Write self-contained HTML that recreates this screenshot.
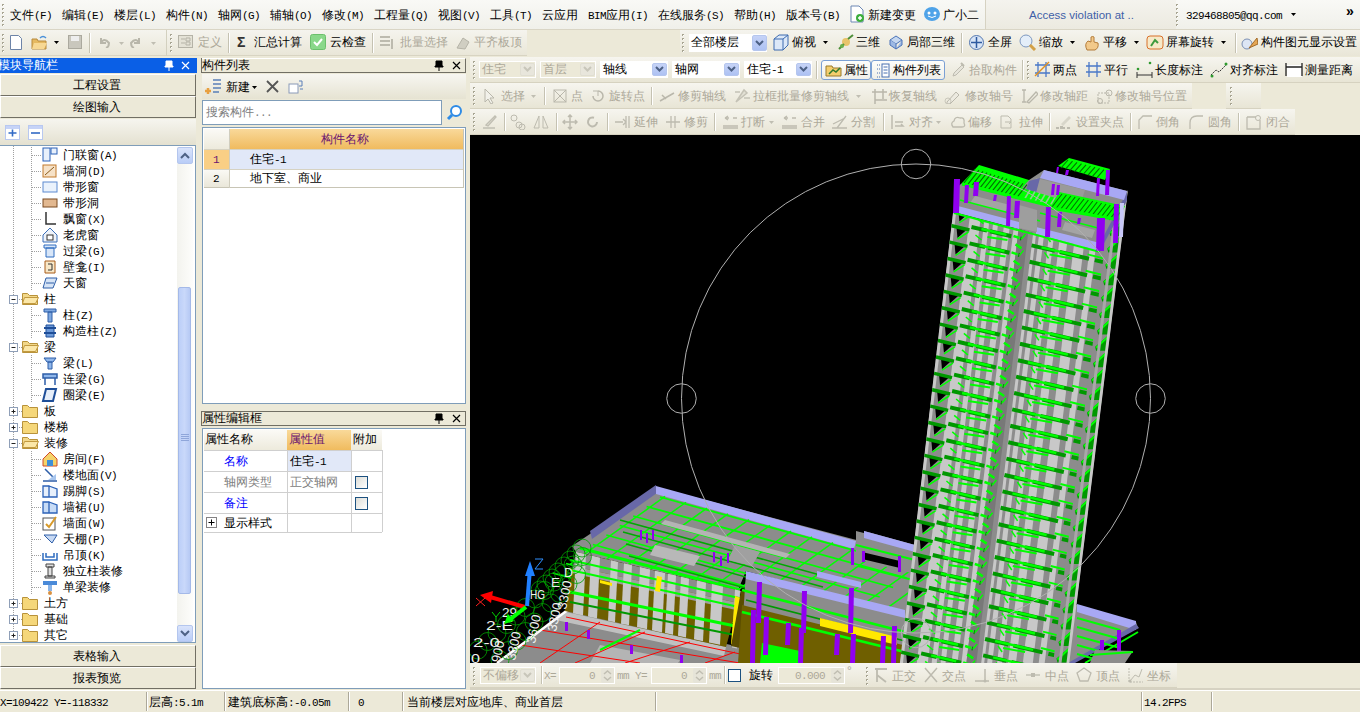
<!DOCTYPE html>
<html><head><meta charset="utf-8">
<style>
*{box-sizing:border-box;margin:0;padding:0}
body{width:1360px;height:712px;overflow:hidden;position:relative;background:#ECE9D8;font-family:"Liberation Sans",sans-serif;font-size:12px;color:#000}
.a{position:absolute;display:block}
.t{position:absolute;white-space:nowrap;line-height:12px;height:12px;font-size:12px}
.asc{font-family:"Liberation Mono",monospace;font-size:11px;letter-spacing:-0.6px}
.dis{color:#ACA899}
</style></head><body>

<div class="a" style="left:0px;top:0px;width:1360px;height:29px;background:linear-gradient(#F9F9F6,#F0F0EA)"></div>
<div class="a" style="left:0px;top:29px;width:1360px;height:1px;background:#D9D5C5"></div>
<svg class="a" style="left:2px;top:4px;" width="3" height="22" viewBox="0 0 3 22"><rect x="0" y="0" width="2" height="2" fill="#A8A592"/><rect x="1" y="1" width="1" height="1" fill="#fff"/><rect x="0" y="4" width="2" height="2" fill="#A8A592"/><rect x="1" y="5" width="1" height="1" fill="#fff"/><rect x="0" y="8" width="2" height="2" fill="#A8A592"/><rect x="1" y="9" width="1" height="1" fill="#fff"/><rect x="0" y="12" width="2" height="2" fill="#A8A592"/><rect x="1" y="13" width="1" height="1" fill="#fff"/><rect x="0" y="16" width="2" height="2" fill="#A8A592"/><rect x="1" y="17" width="1" height="1" fill="#fff"/><rect x="0" y="20" width="2" height="2" fill="#A8A592"/><rect x="1" y="21" width="1" height="1" fill="#fff"/></svg>
<div class="t " style="left:10px;top:9px;color:#000;">文件<span class="asc">(F)</span></div>
<div class="t " style="left:62px;top:9px;color:#000;">编辑<span class="asc">(E)</span></div>
<div class="t " style="left:114px;top:9px;color:#000;">楼层<span class="asc">(L)</span></div>
<div class="t " style="left:166px;top:9px;color:#000;">构件<span class="asc">(N)</span></div>
<div class="t " style="left:218px;top:9px;color:#000;">轴网<span class="asc">(G)</span></div>
<div class="t " style="left:270px;top:9px;color:#000;">辅轴<span class="asc">(O)</span></div>
<div class="t " style="left:322px;top:9px;color:#000;">修改<span class="asc">(M)</span></div>
<div class="t " style="left:374px;top:9px;color:#000;">工程量<span class="asc">(Q)</span></div>
<div class="t " style="left:438px;top:9px;color:#000;">视图<span class="asc">(V)</span></div>
<div class="t " style="left:490px;top:9px;color:#000;">工具<span class="asc">(T)</span></div>
<div class="t " style="left:542px;top:9px;color:#000;">云应用</div>
<div class="t " style="left:588px;top:9px;color:#000;"><span class="asc">BIM</span>应用<span class="asc">(I)</span></div>
<div class="t " style="left:658px;top:9px;color:#000;">在线服务<span class="asc">(S)</span></div>
<div class="t " style="left:734px;top:9px;color:#000;">帮助<span class="asc">(H)</span></div>
<div class="t " style="left:786px;top:9px;color:#000;">版本号<span class="asc">(B)</span></div>
<svg class="a" style="left:849px;top:5px;" width="16" height="18" viewBox="0 0 16 18"><path d="M2 1h8l4 4v12H2z" fill="#fff" stroke="#6C87B4"/><circle cx="11" cy="13" r="4" fill="#3DAE3D"/><path fill="none" d="M9 13h4M11 11v4" stroke="#fff" stroke-width="1.5"/></svg>
<div class="t " style="left:868px;top:9px;color:#000;">新建变更</div>
<svg class="a" style="left:923px;top:6px;" width="18" height="16" viewBox="0 0 18 16"><ellipse cx="9" cy="8" rx="8" ry="7" fill="#4FA3E8"/><circle cx="6" cy="7" r="1.5" fill="#fff"/><circle cx="12" cy="7" r="1.5" fill="#fff"/><path d="M5 10q4 3 8 0" stroke="#fff" fill="none"/></svg>
<div class="t " style="left:943px;top:9px;color:#000;">广小二</div>
<div class="a" style="left:985px;top:0px;width:1px;height:29px;background:#D6D2C2"></div>
<div class="a" style="left:986px;top:0px;width:190px;height:29px;background:linear-gradient(#F4F3EE,#ECEAE0)"></div>
<div class="t" style="left:1029px;top:8px;color:#3F5FA8;font-size:11.5px;line-height:14px;height:14px;letter-spacing:0">Access violation at ..</div>
<svg class="a" style="left:1176px;top:4px;" width="3" height="22" viewBox="0 0 3 22"><rect x="0" y="0" width="2" height="2" fill="#A8A592"/><rect x="1" y="1" width="1" height="1" fill="#fff"/><rect x="0" y="4" width="2" height="2" fill="#A8A592"/><rect x="1" y="5" width="1" height="1" fill="#fff"/><rect x="0" y="8" width="2" height="2" fill="#A8A592"/><rect x="1" y="9" width="1" height="1" fill="#fff"/><rect x="0" y="12" width="2" height="2" fill="#A8A592"/><rect x="1" y="13" width="1" height="1" fill="#fff"/><rect x="0" y="16" width="2" height="2" fill="#A8A592"/><rect x="1" y="17" width="1" height="1" fill="#fff"/><rect x="0" y="20" width="2" height="2" fill="#A8A592"/><rect x="1" y="21" width="1" height="1" fill="#fff"/></svg>
<div class="a" style="left:1180px;top:0px;width:160px;height:29px;background:linear-gradient(#F9F9F6,#F0F0EA)"></div>
<div class="t " style="left:1186px;top:9px;color:#000;"><span class="asc">329468805@qq.com</span></div>
<svg class="a" style="left:1291px;top:13px;" width="5" height="3" viewBox="0 0 5 3"><path d="M0 0h5L2.5 3z" fill="#000"/></svg>
<div class="t " style="left:1346px;top:5px;color:#000;font-size:14px;font-weight:bold">»</div>
<div class="a" style="left:0px;top:30px;width:1360px;height:26px;background:#ECE9D8"></div>
<div class="a" style="left:0px;top:30px;width:527px;height:26px;background:linear-gradient(#F5F4EE,#E9E6D7)"></div>
<div class="a" style="left:0px;top:55px;width:527px;height:1px;background:#D8D4C2"></div>
<svg class="a" style="left:2px;top:34px;" width="3" height="18" viewBox="0 0 3 18"><rect x="0" y="0" width="2" height="2" fill="#A8A592"/><rect x="1" y="1" width="1" height="1" fill="#fff"/><rect x="0" y="4" width="2" height="2" fill="#A8A592"/><rect x="1" y="5" width="1" height="1" fill="#fff"/><rect x="0" y="8" width="2" height="2" fill="#A8A592"/><rect x="1" y="9" width="1" height="1" fill="#fff"/><rect x="0" y="12" width="2" height="2" fill="#A8A592"/><rect x="1" y="13" width="1" height="1" fill="#fff"/><rect x="0" y="16" width="2" height="2" fill="#A8A592"/><rect x="1" y="17" width="1" height="1" fill="#fff"/></svg>
<svg class="a" style="left:10px;top:35px;" width="12" height="15" viewBox="0 0 12 15"><path d="M0.5 0.5h8l3 3v11h-11z" fill="#fff" stroke="#6D84A8"/></svg>
<svg class="a" style="left:31px;top:35px;" width="17" height="15" viewBox="0 0 17 15"><path d="M1 4h5l1 2h8v8H1z" fill="#E5B961" stroke="#B88A3C"/><path d="M3 8h13l-3 6H1z" fill="#F7D893"/><path d="M9 3q3-3 6 0" stroke="#4A90D9" fill="none" stroke-width="1.5"/></svg>
<svg class="a" style="left:54px;top:41px;" width="5" height="3" viewBox="0 0 5 3"><path d="M0 0h5L2.5 3z" fill="#000"/></svg>
<svg class="a" style="left:68px;top:35px;" width="14" height="14" viewBox="0 0 14 14"><rect x="0.5" y="0.5" width="13" height="13" fill="#C9C7BD" stroke="#ABA99E"/><rect x="3" y="1" width="8" height="5" fill="#EEE"/></svg>
<div class="a" style="left:89px;top:33px;width:1px;height:20px;background:#C5C2B2"></div>
<div class="a" style="left:90px;top:33px;width:1px;height:20px;background:#fff"></div>
<svg class="a" style="left:98px;top:36px;" width="12" height="12" viewBox="0 0 12 12"><path d="M3 2v5h5M3 7q3-6 8 0q0 4-3 5" stroke="#B8B6AA" stroke-width="2" fill="none"/></svg>
<svg class="a" style="left:119px;top:42px;" width="5" height="3" viewBox="0 0 5 3"><path d="M0 0h5L2.5 3z" fill="#C0BEB2"/></svg>
<svg class="a" style="left:130px;top:36px;" width="12" height="12" viewBox="0 0 12 12"><path d="M9 2v5H4M9 7q-3-6-8 0q0 4 3 5" stroke="#B8B6AA" stroke-width="2" fill="none"/></svg>
<svg class="a" style="left:151px;top:42px;" width="5" height="3" viewBox="0 0 5 3"><path d="M0 0h5L2.5 3z" fill="#C0BEB2"/></svg>
<div class="a" style="left:166px;top:30px;width:1px;height:26px;background:#D3D0BF"></div>
<svg class="a" style="left:170px;top:34px;" width="3" height="18" viewBox="0 0 3 18"><rect x="0" y="0" width="2" height="2" fill="#A8A592"/><rect x="1" y="1" width="1" height="1" fill="#fff"/><rect x="0" y="4" width="2" height="2" fill="#A8A592"/><rect x="1" y="5" width="1" height="1" fill="#fff"/><rect x="0" y="8" width="2" height="2" fill="#A8A592"/><rect x="1" y="9" width="1" height="1" fill="#fff"/><rect x="0" y="12" width="2" height="2" fill="#A8A592"/><rect x="1" y="13" width="1" height="1" fill="#fff"/><rect x="0" y="16" width="2" height="2" fill="#A8A592"/><rect x="1" y="17" width="1" height="1" fill="#fff"/></svg>
<svg class="a" style="left:178px;top:35px;" width="15" height="13" viewBox="0 0 15 13"><rect x="0.5" y="0.5" width="14" height="12" fill="#E4E2D6" stroke="#B5B3A7"/><path d="M3 4h4M3 8h4M8 3h4v3H8zM8 7h4v3H8z" stroke="#B5B3A7" fill="none"/></svg>
<div class="t dis" style="left:198px;top:36px;color:#ACA899;">定义</div>
<div class="a" style="left:228px;top:33px;width:1px;height:20px;background:#C5C2B2"></div>
<div class="a" style="left:229px;top:33px;width:1px;height:20px;background:#fff"></div>
<div class="t " style="left:237px;top:36px;color:#000;font-size:14px;font-weight:bold;color:#333">Σ</div>
<div class="t " style="left:254px;top:36px;color:#000;">汇总计算</div>
<svg class="a" style="left:310px;top:34px;" width="16" height="16" viewBox="0 0 16 16"><rect x="0.5" y="0.5" width="15" height="15" rx="2" fill="#8AD88A" stroke="#6CC06C"/><path d="M4 8l3 3l5-6" stroke="#fff" stroke-width="2" fill="none"/></svg>
<div class="t " style="left:330px;top:36px;color:#000;">云检查</div>
<div class="a" style="left:372px;top:33px;width:1px;height:20px;background:#C5C2B2"></div>
<div class="a" style="left:373px;top:33px;width:1px;height:20px;background:#fff"></div>
<svg class="a" style="left:379px;top:35px;" width="16" height="14" viewBox="0 0 16 14"><path fill="none" d="M1 2h10M1 6h10M1 10h10M13 4v10" stroke="#BDBBAF" stroke-width="2"/></svg>
<div class="t dis" style="left:400px;top:36px;color:#ACA899;">批量选择</div>
<svg class="a" style="left:455px;top:35px;" width="16" height="15" viewBox="0 0 16 15"><path d="M2 13l6-10l6 4l-4 7z" fill="#D0CEC2" stroke="#B5B3A7"/></svg>
<div class="t dis" style="left:474px;top:36px;color:#ACA899;">平齐板顶</div>
<svg class="a" style="left:682px;top:34px;" width="3" height="18" viewBox="0 0 3 18"><rect x="0" y="0" width="2" height="2" fill="#A8A592"/><rect x="1" y="1" width="1" height="1" fill="#fff"/><rect x="0" y="4" width="2" height="2" fill="#A8A592"/><rect x="1" y="5" width="1" height="1" fill="#fff"/><rect x="0" y="8" width="2" height="2" fill="#A8A592"/><rect x="1" y="9" width="1" height="1" fill="#fff"/><rect x="0" y="12" width="2" height="2" fill="#A8A592"/><rect x="1" y="13" width="1" height="1" fill="#fff"/><rect x="0" y="16" width="2" height="2" fill="#A8A592"/><rect x="1" y="17" width="1" height="1" fill="#fff"/></svg>
<div class="a" style="left:680px;top:30px;width:680px;height:26px;background:linear-gradient(#F5F4EE,#E9E6D7)"></div>
<svg class="a" style="left:682px;top:34px;" width="3" height="18" viewBox="0 0 3 18"><rect x="0" y="0" width="2" height="2" fill="#A8A592"/><rect x="1" y="1" width="1" height="1" fill="#fff"/><rect x="0" y="4" width="2" height="2" fill="#A8A592"/><rect x="1" y="5" width="1" height="1" fill="#fff"/><rect x="0" y="8" width="2" height="2" fill="#A8A592"/><rect x="1" y="9" width="1" height="1" fill="#fff"/><rect x="0" y="12" width="2" height="2" fill="#A8A592"/><rect x="1" y="13" width="1" height="1" fill="#fff"/><rect x="0" y="16" width="2" height="2" fill="#A8A592"/><rect x="1" y="17" width="1" height="1" fill="#fff"/></svg>
<div class="a" style="left:689px;top:34px;width:78px;height:18px;background:#fff;border:1px solid #fff"></div>
<div class="t " style="left:691px;top:36px;color:#000;">全部楼层</div>
<div class="a" style="left:752px;top:35px;width:15px;height:16px;background:linear-gradient(#C6D3F7,#AEC2F3);border:1px solid #B5C6EE;border-radius:2px"></div>
<svg class="a" style="left:755px;top:40px;" width="9" height="6" viewBox="0 0 9 6"><path d="M1 1l3.5 3.5L8 1" stroke="#4D6185" stroke-width="2" fill="none"/></svg>
<svg class="a" style="left:772px;top:34px;" width="17" height="17" viewBox="0 0 17 17"><path d="M2 5l5-4h9v10l-5 5H2z" fill="#DCE8F8" stroke="#3C6BB0"/><path d="M2 5h9v11M11 5l5-4" stroke="#3C6BB0" fill="none"/></svg>
<div class="t " style="left:792px;top:36px;color:#000;">俯视</div>
<svg class="a" style="left:823px;top:41px;" width="5" height="3" viewBox="0 0 5 3"><path d="M0 0h5L2.5 3z" fill="#000"/></svg>
<svg class="a" style="left:837px;top:34px;" width="17" height="17" viewBox="0 0 17 17"><circle cx="9" cy="8" r="4" fill="#E8C46A"/><path fill="none" d="M2 15l5-5M11 5l5-4" stroke="#4E8F3A" stroke-width="2"/><circle cx="5" cy="12" r="2" fill="#6AAF4A"/></svg>
<div class="t " style="left:856px;top:36px;color:#000;">三维</div>
<svg class="a" style="left:887px;top:34px;" width="17" height="17" viewBox="0 0 17 17"><path d="M3 6l6-4l6 4l-6 4z" fill="#C5D7F0" stroke="#4A73B8"/><path d="M3 6v5l6 4v-5M15 6v5l-6 4" fill="#9DB9E4" stroke="#4A73B8"/></svg>
<div class="t " style="left:907px;top:36px;color:#000;">局部三维</div>
<div class="a" style="left:961px;top:33px;width:1px;height:20px;background:#C5C2B2"></div>
<div class="a" style="left:962px;top:33px;width:1px;height:20px;background:#fff"></div>
<svg class="a" style="left:968px;top:34px;" width="17" height="17" viewBox="0 0 17 17"><circle cx="8.5" cy="8.5" r="7" fill="#D7E4F6" stroke="#5578B0"/><path fill="none" d="M8.5 3v11M3 8.5h11" stroke="#2E5AA0" stroke-width="1.5"/></svg>
<div class="t " style="left:988px;top:36px;color:#000;">全屏</div>
<svg class="a" style="left:1019px;top:34px;" width="18" height="17" viewBox="0 0 18 17"><circle cx="7" cy="7" r="6" fill="#E4EEF9" stroke="#7D98C0"/><path fill="none" d="M11 11l5 5" stroke="#D3A046" stroke-width="3"/></svg>
<div class="t " style="left:1039px;top:36px;color:#000;">缩放</div>
<svg class="a" style="left:1070px;top:41px;" width="5" height="3" viewBox="0 0 5 3"><path d="M0 0h5L2.5 3z" fill="#000"/></svg>
<svg class="a" style="left:1083px;top:34px;" width="18" height="17" viewBox="0 0 18 17"><path d="M4 16q-3-6 1-9l3 1v-5q2-1 3 0v5l4 1q1 5-3 7z" fill="#F2C98A" stroke="#B47C3A"/></svg>
<div class="t " style="left:1103px;top:36px;color:#000;">平移</div>
<svg class="a" style="left:1134px;top:41px;" width="5" height="3" viewBox="0 0 5 3"><path d="M0 0h5L2.5 3z" fill="#000"/></svg>
<svg class="a" style="left:1146px;top:34px;" width="18" height="17" viewBox="0 0 18 17"><rect x="1" y="2" width="16" height="13" rx="3" fill="#F6E9C8" stroke="#D8702A"/><path d="M5 12l4-6l3 3" stroke="#3E9A3E" stroke-width="2" fill="none"/></svg>
<div class="t " style="left:1166px;top:36px;color:#000;">屏幕旋转</div>
<svg class="a" style="left:1221px;top:41px;" width="5" height="3" viewBox="0 0 5 3"><path d="M0 0h5L2.5 3z" fill="#000"/></svg>
<div class="a" style="left:1235px;top:33px;width:1px;height:20px;background:#C5C2B2"></div>
<div class="a" style="left:1236px;top:33px;width:1px;height:20px;background:#fff"></div>
<svg class="a" style="left:1241px;top:34px;" width="17" height="17" viewBox="0 0 17 17"><circle cx="6" cy="10" r="5" fill="#DDE6F4" stroke="#7B8FB3"/><path d="M8 14l8-10l1 6z" fill="#E5A754" stroke="#A36B2A"/></svg>
<div class="t " style="left:1261px;top:36px;color:#000;">构件图元显示设置</div>
<div class="a" style="left:0px;top:56px;width:1360px;height:2px;background:#ECE9D8"></div>
<div class="a" style="left:0px;top:58px;width:197px;height:15px;background:#0A5FE6"></div>
<div class="t " style="left:-2px;top:59px;color:#fff;">模块导航栏</div>
<svg class="a" style="left:164px;top:60px;" width="10" height="11" viewBox="0 0 10 11"><path d="M2 1h6v5h1v1H1V6h1zM5 7v4" stroke="#fff" fill="#fff"/></svg>
<svg class="a" style="left:181px;top:61px;" width="9" height="9" viewBox="0 0 9 9"><path fill="none" d="M1 1l7 7M8 1l-7 7" stroke="#fff" stroke-width="1.2"/></svg>
<div class="a" style="left:0px;top:74px;width:196px;height:22px;background:#ECE9D8;border:1px solid;border-color:#fff #716F64 #716F64 #fff"></div>
<div class="t " style="left:73px;top:79px;color:#000;">工程设置</div>
<div class="a" style="left:0px;top:96px;width:196px;height:22px;background:#ECE9D8;border:1px solid;border-color:#fff #716F64 #716F64 #fff"></div>
<div class="t " style="left:73px;top:101px;color:#000;">绘图输入</div>
<div class="a" style="left:0px;top:119px;width:196px;height:27px;background:linear-gradient(#F6F5EF,#E3E0CF)"></div>
<div class="a" style="left:0px;top:145px;width:196px;height:1px;background:#7F9DB9"></div>
<div class="a" style="left:5px;top:125px;width:15px;height:15px;background:linear-gradient(#C6D3F7 0 3px,#fff 3px);border:1px solid #B8C8F0"></div>
<svg class="a" style="left:5px;top:125px;" width="15" height="15" viewBox="0 0 15 15"><path fill="none" d="M3.5 8h8M7.5 4.5v7" stroke="#316AC5" stroke-width="1.6"/></svg>
<div class="a" style="left:28px;top:125px;width:15px;height:15px;background:linear-gradient(#C6D3F7 0 3px,#fff 3px);border:1px solid #B8C8F0"></div>
<svg class="a" style="left:28px;top:125px;" width="15" height="15" viewBox="0 0 15 15"><path fill="none" d="M3 8h9" stroke="#316AC5" stroke-width="1.6"/></svg>
<div class="a" style="left:0px;top:146px;width:196px;height:497px;background:#fff;border-right:1px solid #7F9DB9;border-bottom:1px solid #7F9DB9"></div>
<div class="t " style="left:63px;top:149px;color:#000;">门联窗<span class="asc">(A)</span></div>
<div class="t " style="left:63px;top:165px;color:#000;">墙洞<span class="asc">(D)</span></div>
<div class="t " style="left:63px;top:181px;color:#000;">带形窗</div>
<div class="t " style="left:63px;top:197px;color:#000;">带形洞</div>
<div class="t " style="left:63px;top:213px;color:#000;">飘窗<span class="asc">(X)</span></div>
<div class="t " style="left:63px;top:229px;color:#000;">老虎窗</div>
<div class="t " style="left:63px;top:245px;color:#000;">过梁<span class="asc">(G)</span></div>
<div class="t " style="left:63px;top:261px;color:#000;">壁龛<span class="asc">(I)</span></div>
<div class="t " style="left:63px;top:277px;color:#000;">天窗</div>
<div class="t " style="left:44px;top:293px;color:#000;">柱</div>
<div class="t " style="left:63px;top:309px;color:#000;">柱<span class="asc">(Z)</span></div>
<div class="t " style="left:63px;top:325px;color:#000;">构造柱<span class="asc">(Z)</span></div>
<div class="t " style="left:44px;top:341px;color:#000;">梁</div>
<div class="t " style="left:63px;top:357px;color:#000;">梁<span class="asc">(L)</span></div>
<div class="t " style="left:63px;top:373px;color:#000;">连梁<span class="asc">(G)</span></div>
<div class="t " style="left:63px;top:389px;color:#000;">圈梁<span class="asc">(E)</span></div>
<div class="t " style="left:44px;top:405px;color:#000;">板</div>
<div class="t " style="left:44px;top:421px;color:#000;">楼梯</div>
<div class="t " style="left:44px;top:437px;color:#000;">装修</div>
<div class="t " style="left:63px;top:453px;color:#000;">房间<span class="asc">(F)</span></div>
<div class="t " style="left:63px;top:469px;color:#000;">楼地面<span class="asc">(V)</span></div>
<div class="t " style="left:63px;top:485px;color:#000;">踢脚<span class="asc">(S)</span></div>
<div class="t " style="left:63px;top:501px;color:#000;">墙裙<span class="asc">(U)</span></div>
<div class="t " style="left:63px;top:517px;color:#000;">墙面<span class="asc">(W)</span></div>
<div class="t " style="left:63px;top:533px;color:#000;">天棚<span class="asc">(P)</span></div>
<div class="t " style="left:63px;top:549px;color:#000;">吊顶<span class="asc">(K)</span></div>
<div class="t " style="left:63px;top:565px;color:#000;">独立柱装修</div>
<div class="t " style="left:63px;top:581px;color:#000;">单梁装修</div>
<div class="t " style="left:44px;top:597px;color:#000;">土方</div>
<div class="t " style="left:44px;top:613px;color:#000;">基础</div>
<div class="t " style="left:44px;top:629px;color:#000;">其它</div>
<svg class="a" style="left:0px;top:0px;pointer-events:none" width="176" height="712" viewBox="0 0 176 712"><path fill="none" d="M13.5 146V636" stroke="#A0A0A0" stroke-dasharray="1 1"/><path fill="none" d="M31.5 147V163" stroke="#A0A0A0" stroke-dasharray="1 1"/><path fill="none" d="M32 155.5H41" stroke="#A0A0A0" stroke-dasharray="1 1"/><g transform="translate(42 147)"><rect x="1" y="1" width="7" height="13" fill="#E8F0FB" stroke="#2C62B8"/><rect x="9" y="1" width="6" height="6" fill="#E8F0FB" stroke="#2C62B8"/></g><path fill="none" d="M31.5 163V179" stroke="#A0A0A0" stroke-dasharray="1 1"/><path fill="none" d="M32 171.5H41" stroke="#A0A0A0" stroke-dasharray="1 1"/><g transform="translate(42 163)"><rect x="1" y="2" width="13" height="12" fill="#F6E2C8" stroke="#C27A2C"/><path fill="none" d="M3 12l9-8" stroke="#8A5A1A"/></g><path fill="none" d="M31.5 179V195" stroke="#A0A0A0" stroke-dasharray="1 1"/><path fill="none" d="M32 187.5H41" stroke="#A0A0A0" stroke-dasharray="1 1"/><g transform="translate(42 179)"><rect x="1" y="3" width="14" height="10" fill="#EAF2FC" stroke="#5C8AD0"/></g><path fill="none" d="M31.5 195V211" stroke="#A0A0A0" stroke-dasharray="1 1"/><path fill="none" d="M32 203.5H41" stroke="#A0A0A0" stroke-dasharray="1 1"/><g transform="translate(42 195)"><rect x="1" y="4" width="14" height="8" fill="#E2B890" stroke="#7A4A20"/></g><path fill="none" d="M31.5 211V227" stroke="#A0A0A0" stroke-dasharray="1 1"/><path fill="none" d="M32 219.5H41" stroke="#A0A0A0" stroke-dasharray="1 1"/><g transform="translate(42 211)"><path d="M4 1v12h10" stroke="#333" fill="none" stroke-width="1.5"/></g><path fill="none" d="M31.5 227V243" stroke="#A0A0A0" stroke-dasharray="1 1"/><path fill="none" d="M32 235.5H41" stroke="#A0A0A0" stroke-dasharray="1 1"/><g transform="translate(42 227)"><path d="M1 8l7-7l7 7v7H1z" fill="#EEF3FA" stroke="#3A6EB8"/><rect x="5" y="8" width="6" height="5" fill="#fff" stroke="#333"/></g><path fill="none" d="M31.5 243V259" stroke="#A0A0A0" stroke-dasharray="1 1"/><path fill="none" d="M32 251.5H41" stroke="#A0A0A0" stroke-dasharray="1 1"/><g transform="translate(42 243)"><path d="M2 2h12v3H2zM4 5h8v9H4z" fill="#D8E6F8" stroke="#2E6CC0"/></g><path fill="none" d="M31.5 259V275" stroke="#A0A0A0" stroke-dasharray="1 1"/><path fill="none" d="M32 267.5H41" stroke="#A0A0A0" stroke-dasharray="1 1"/><g transform="translate(42 259)"><path d="M3 2h10v12H3z" fill="#F8E8C8" stroke="#A85C1A"/><path d="M6 5h4v6H6" stroke="#333" fill="none"/></g><path fill="none" d="M31.5 275V291" stroke="#A0A0A0" stroke-dasharray="1 1"/><path fill="none" d="M32 283.5H41" stroke="#A0A0A0" stroke-dasharray="1 1"/><g transform="translate(42 275)"><path d="M4 3h11l-4 10H1z" fill="#D6E4F6" stroke="#2E5EA8"/><path fill="none" d="M4 8h8" stroke="#2E5EA8"/></g><path fill="none" d="M17 299.5H22" stroke="#A0A0A0" stroke-dasharray="1 1"/><rect x="9.5" y="295.5" width="8" height="8" fill="#fff" stroke="#8F9FB8"/><path fill="none" d="M11.5 299.5h4" stroke="#222"/><path d="M22.5 293.5h5l2 2h8v9h-15z" fill="#F2D88A" stroke="#B8923A"/><path d="M24.5 297.5h14l-3 6h-13z" fill="#FBE7A8" stroke="#C29A40"/><path fill="none" d="M31.5 307V323" stroke="#A0A0A0" stroke-dasharray="1 1"/><path fill="none" d="M32 315.5H41" stroke="#A0A0A0" stroke-dasharray="1 1"/><g transform="translate(42 307)"><path d="M2 2h12v3H2zM6 5h4v10H6z" fill="#7FA8E0" stroke="#2E5EA8"/></g><path fill="none" d="M31.5 323V339" stroke="#A0A0A0" stroke-dasharray="1 1"/><path fill="none" d="M32 331.5H41" stroke="#A0A0A0" stroke-dasharray="1 1"/><g transform="translate(42 323)"><path d="M4 2h8v12H4z" fill="#6A98D8" stroke="#1E4E98"/><path fill="none" d="M2 5h12M2 10h12" stroke="#1E4E98" stroke-width="2"/></g><path fill="none" d="M17 347.5H22" stroke="#A0A0A0" stroke-dasharray="1 1"/><rect x="9.5" y="343.5" width="8" height="8" fill="#fff" stroke="#8F9FB8"/><path fill="none" d="M11.5 347.5h4" stroke="#222"/><path d="M22.5 341.5h5l2 2h8v9h-15z" fill="#F2D88A" stroke="#B8923A"/><path d="M24.5 345.5h14l-3 6h-13z" fill="#FBE7A8" stroke="#C29A40"/><path fill="none" d="M31.5 355V371" stroke="#A0A0A0" stroke-dasharray="1 1"/><path fill="none" d="M32 363.5H41" stroke="#A0A0A0" stroke-dasharray="1 1"/><g transform="translate(42 355)"><path d="M2 3h12l-3 4H5zM6 7h4v7H6z" fill="#8FB6EA" stroke="#2E5EA8"/></g><path fill="none" d="M31.5 371V387" stroke="#A0A0A0" stroke-dasharray="1 1"/><path fill="none" d="M32 379.5H41" stroke="#A0A0A0" stroke-dasharray="1 1"/><g transform="translate(42 371)"><path d="M1 3h14v4H1zM3 7v7M13 7v7" fill="#8FB6EA" stroke="#2E5EA8" stroke-width="1.5"/></g><path fill="none" d="M31.5 387V403" stroke="#A0A0A0" stroke-dasharray="1 1"/><path fill="none" d="M32 395.5H41" stroke="#A0A0A0" stroke-dasharray="1 1"/><g transform="translate(42 387)"><path d="M4 2h10l-3 12H1z" fill="#E6EEF9" stroke="#1E4E98" stroke-width="2"/></g><path fill="none" d="M17 411.5H22" stroke="#A0A0A0" stroke-dasharray="1 1"/><rect x="9.5" y="407.5" width="8" height="8" fill="#fff" stroke="#8F9FB8"/><path fill="none" d="M11.5 411.5h4" stroke="#222"/><path fill="none" d="M13.5 409.5v4" stroke="#222"/><path d="M22.5 405.5h5l2 2h8v10h-15z" fill="#F5D77A" stroke="#B8923A"/><path fill="none" d="M17 427.5H22" stroke="#A0A0A0" stroke-dasharray="1 1"/><rect x="9.5" y="423.5" width="8" height="8" fill="#fff" stroke="#8F9FB8"/><path fill="none" d="M11.5 427.5h4" stroke="#222"/><path fill="none" d="M13.5 425.5v4" stroke="#222"/><path d="M22.5 421.5h5l2 2h8v10h-15z" fill="#F5D77A" stroke="#B8923A"/><path fill="none" d="M17 443.5H22" stroke="#A0A0A0" stroke-dasharray="1 1"/><rect x="9.5" y="439.5" width="8" height="8" fill="#fff" stroke="#8F9FB8"/><path fill="none" d="M11.5 443.5h4" stroke="#222"/><path d="M22.5 437.5h5l2 2h8v9h-15z" fill="#F2D88A" stroke="#B8923A"/><path d="M24.5 441.5h14l-3 6h-13z" fill="#FBE7A8" stroke="#C29A40"/><path fill="none" d="M31.5 451V467" stroke="#A0A0A0" stroke-dasharray="1 1"/><path fill="none" d="M32 459.5H41" stroke="#A0A0A0" stroke-dasharray="1 1"/><g transform="translate(42 451)"><path d="M1 8l7-7l7 7v7H1z" fill="#F4D36A" stroke="#D04A2A"/><rect x="5" y="9" width="6" height="6" fill="#3E8ED8"/></g><path fill="none" d="M31.5 467V483" stroke="#A0A0A0" stroke-dasharray="1 1"/><path fill="none" d="M32 475.5H41" stroke="#A0A0A0" stroke-dasharray="1 1"/><g transform="translate(42 467)"><path fill="none" d="M1 14h14M3 2l10 10" stroke="#2E5EA8" stroke-width="1.5"/><path d="M6 13l8-6v6z" fill="#A8C6EE"/></g><path fill="none" d="M31.5 483V499" stroke="#A0A0A0" stroke-dasharray="1 1"/><path fill="none" d="M32 491.5H41" stroke="#A0A0A0" stroke-dasharray="1 1"/><g transform="translate(42 483)"><path d="M1 3h6v11H1zM7 3l8 3v8H7z" fill="#E8F0FB" stroke="#2C62B8" stroke-width="1.3"/></g><path fill="none" d="M31.5 499V515" stroke="#A0A0A0" stroke-dasharray="1 1"/><path fill="none" d="M32 507.5H41" stroke="#A0A0A0" stroke-dasharray="1 1"/><g transform="translate(42 499)"><path d="M1 3h6v11H1zM7 3l8 3v8H7z" fill="#C8DCF6" stroke="#2C62B8" stroke-width="1.3"/></g><path fill="none" d="M31.5 515V531" stroke="#A0A0A0" stroke-dasharray="1 1"/><path fill="none" d="M32 523.5H41" stroke="#A0A0A0" stroke-dasharray="1 1"/><g transform="translate(42 515)"><rect x="1" y="3" width="12" height="12" fill="#fff" stroke="#555"/><path d="M4 9l3 3l7-10" stroke="#D89A2A" stroke-width="2" fill="none"/></g><path fill="none" d="M31.5 531V547" stroke="#A0A0A0" stroke-dasharray="1 1"/><path fill="none" d="M32 539.5H41" stroke="#A0A0A0" stroke-dasharray="1 1"/><g transform="translate(42 531)"><path d="M2 4h13l-5 8z" fill="#C8DAF4" stroke="#2E5EA8"/></g><path fill="none" d="M31.5 547V563" stroke="#A0A0A0" stroke-dasharray="1 1"/><path fill="none" d="M32 555.5H41" stroke="#A0A0A0" stroke-dasharray="1 1"/><g transform="translate(42 547)"><path d="M1 6v7h14V6M4 6v4h8V6" stroke="#2E6CC0" stroke-width="1.5" fill="none"/></g><path fill="none" d="M31.5 563V579" stroke="#A0A0A0" stroke-dasharray="1 1"/><path fill="none" d="M32 571.5H41" stroke="#A0A0A0" stroke-dasharray="1 1"/><g transform="translate(42 563)"><path d="M4 1h8v3H4zM6 4h4v9H6zM3 13h10v2H3z" fill="#E0E0E0" stroke="#444"/></g><path fill="none" d="M31.5 579V595" stroke="#A0A0A0" stroke-dasharray="1 1"/><path fill="none" d="M32 587.5H41" stroke="#A0A0A0" stroke-dasharray="1 1"/><g transform="translate(42 579)"><path d="M1 2h14v4H1z" fill="#4A8AD8"/><path d="M6 6h4v6H6z" fill="#8AB4E8"/><circle cx="8" cy="14" r="2" fill="#D89040"/></g><path fill="none" d="M17 603.5H22" stroke="#A0A0A0" stroke-dasharray="1 1"/><rect x="9.5" y="599.5" width="8" height="8" fill="#fff" stroke="#8F9FB8"/><path fill="none" d="M11.5 603.5h4" stroke="#222"/><path fill="none" d="M13.5 601.5v4" stroke="#222"/><path d="M22.5 597.5h5l2 2h8v10h-15z" fill="#F5D77A" stroke="#B8923A"/><path fill="none" d="M17 619.5H22" stroke="#A0A0A0" stroke-dasharray="1 1"/><rect x="9.5" y="615.5" width="8" height="8" fill="#fff" stroke="#8F9FB8"/><path fill="none" d="M11.5 619.5h4" stroke="#222"/><path fill="none" d="M13.5 617.5v4" stroke="#222"/><path d="M22.5 613.5h5l2 2h8v10h-15z" fill="#F5D77A" stroke="#B8923A"/><path fill="none" d="M17 635.5H22" stroke="#A0A0A0" stroke-dasharray="1 1"/><rect x="9.5" y="631.5" width="8" height="8" fill="#fff" stroke="#8F9FB8"/><path fill="none" d="M11.5 635.5h4" stroke="#222"/><path fill="none" d="M13.5 633.5v4" stroke="#222"/><path d="M22.5 629.5h5l2 2h8v10h-15z" fill="#F5D77A" stroke="#B8923A"/></svg>
<div class="a" style="left:177px;top:147px;width:16px;height:495px;background:linear-gradient(90deg,#F3F3EE,#FDFDFB)"></div>
<div class="a" style="left:177px;top:147px;width:16px;height:17px;background:linear-gradient(#D9E3FB,#B9CDF7);border:1px solid #B4C6EE;border-radius:2px"></div>
<svg class="a" style="left:180px;top:152px;" width="10" height="7" viewBox="0 0 10 7"><path d="M1 6l4-4l4 4" stroke="#4D6185" stroke-width="2" fill="none"/></svg>
<div class="a" style="left:178px;top:287px;width:13px;height:307px;background:linear-gradient(90deg,#BCCFF8,#C9D8FA 50%,#B6C9F4);border:1px solid #A4B9E8;border-radius:2px"></div>
<svg class="a" style="left:181px;top:434px;" width="8" height="8" viewBox="0 0 8 8"><path fill="none" d="M0 .5h8M0 2.5h8M0 4.5h8M0 6.5h8" stroke="#8FA6DA"/></svg>
<div class="a" style="left:177px;top:625px;width:16px;height:17px;background:linear-gradient(#D9E3FB,#B9CDF7);border:1px solid #B4C6EE;border-radius:2px"></div>
<svg class="a" style="left:180px;top:630px;" width="10" height="7" viewBox="0 0 10 7"><path d="M1 1l4 4l4-4" stroke="#4D6185" stroke-width="2" fill="none"/></svg>
<div class="a" style="left:0px;top:645px;width:196px;height:22px;background:#ECE9D8;border:1px solid;border-color:#fff #716F64 #716F64 #fff"></div>
<div class="t " style="left:73px;top:650px;color:#000;">表格输入</div>
<div class="a" style="left:0px;top:667px;width:196px;height:22px;background:#ECE9D8;border:1px solid;border-color:#fff #716F64 #716F64 #fff"></div>
<div class="t " style="left:73px;top:672px;color:#000;">报表预览</div>
<div class="a" style="left:197px;top:58px;width:4px;height:632px;background:#ECE9D8"></div>
<div class="a" style="left:201px;top:58px;width:265px;height:15px;background:#ECE9D8;border-top:1px solid #fff;border-bottom:1px solid #716F64;border-right:1px solid #716F64"></div>
<div class="a" style="left:201px;top:58px;width:1px;height:15px;background:#716F64"></div>
<div class="t " style="left:202px;top:59px;color:#000;">构件列表</div>
<svg class="a" style="left:434px;top:60px;" width="10" height="11" viewBox="0 0 10 11"><path d="M2 1h6v5h1v1H1V6h1zM5 7v4" stroke="#000" fill="#000"/></svg>
<svg class="a" style="left:452px;top:61px;" width="9" height="9" viewBox="0 0 9 9"><path fill="none" d="M1 1l7 7M8 1l-7 7" stroke="#000" stroke-width="1.2"/></svg>
<div class="a" style="left:202px;top:74px;width:264px;height:25px;background:linear-gradient(#F7F6F1,#E6E3D2)"></div>
<svg class="a" style="left:205px;top:78px;" width="18" height="17" viewBox="0 0 18 17"><path fill="none" d="M8 2h8M8 6h8M8 10h8M8 14h6" stroke="#5A7FB8" stroke-width="1.5"/><path fill="none" d="M3 10v6M0 13h6" stroke="#E8A040" stroke-width="2.5"/></svg>
<div class="t " style="left:226px;top:81px;color:#000;">新建</div>
<svg class="a" style="left:252px;top:86px;" width="5" height="3" viewBox="0 0 5 3"><path d="M0 0h5L2.5 3z" fill="#000"/></svg>
<svg class="a" style="left:265px;top:79px;" width="15" height="15" viewBox="0 0 15 15"><path fill="none" d="M2 2l11 11M13 2L2 13" stroke="#555" stroke-width="1.8"/></svg>
<svg class="a" style="left:288px;top:80px;" width="16" height="14" viewBox="0 0 16 14"><rect x="1" y="4" width="9" height="9" fill="#fff" stroke="#8A9AB8"/><path fill="none" d="M11 1h3v5h-3M12 9h3" stroke="#5A7FB8"/></svg>
<div class="a" style="left:202px;top:100px;width:240px;height:25px;background:#fff;border:1px solid #7F9DB9"></div>
<div class="t " style="left:206px;top:106px;color:#808080;">搜索构件<span class="asc">...</span></div>
<div class="a" style="left:443px;top:100px;width:22px;height:25px;background:#ECE9D8"></div>
<svg class="a" style="left:446px;top:104px;" width="17" height="17" viewBox="0 0 17 17"><circle cx="10" cy="7" r="5" fill="#fff" stroke="#2E8BE6" stroke-width="2"/><path fill="none" d="M6 11l-4 4" stroke="#2E8BE6" stroke-width="3"/></svg>
<div class="a" style="left:202px;top:127px;width:264px;height:277px;background:#fff;border:1px solid #7F9DB9"></div>
<div class="a" style="left:204px;top:129px;width:25px;height:20px;background:linear-gradient(#FBFAF6,#EDEADC)"></div>
<div class="a" style="left:229px;top:129px;width:235px;height:20px;background:linear-gradient(#F9D99A,#F0BB5E)"></div>
<div class="t " style="left:321px;top:133px;color:#6A1570;">构件名称</div>
<div class="a" style="left:204px;top:149px;width:260px;height:1px;background:#D6D2C2"></div>
<div class="a" style="left:204px;top:150px;width:25px;height:19px;background:#F9CF85"></div>
<div class="a" style="left:229px;top:150px;width:235px;height:19px;background:#E1E8F8"></div>
<div class="t " style="left:213px;top:153px;color:#6A1570;"><span class="asc">1</span></div>
<div class="t " style="left:250px;top:153px;color:#000;">住宅<span class="asc">-1</span></div>
<div class="a" style="left:204px;top:169px;width:260px;height:1px;background:#D6D2C2"></div>
<div class="a" style="left:204px;top:170px;width:25px;height:18px;background:linear-gradient(#FAF9F4,#E9E6D8)"></div>
<div class="t " style="left:213px;top:172px;color:#000;"><span class="asc">2</span></div>
<div class="t " style="left:250px;top:172px;color:#000;">地下室、商业</div>
<div class="a" style="left:204px;top:187px;width:260px;height:1px;background:#C8C5B5"></div>
<div class="a" style="left:229px;top:129px;width:1px;height:59px;background:#D0CDBE"></div>
<div class="a" style="left:463px;top:129px;width:1px;height:59px;background:#C8C5B5"></div>
<div class="a" style="left:202px;top:405px;width:264px;height:6px;background:#ECE9D8"></div>
<div class="a" style="left:201px;top:411px;width:265px;height:15px;background:#ECE9D8;border-top:1px solid #716F64;border-bottom:1px solid #716F64;border-right:1px solid #716F64"></div>
<div class="a" style="left:201px;top:411px;width:1px;height:15px;background:#716F64"></div>
<div class="t " style="left:202px;top:412px;color:#000;">属性编辑框</div>
<svg class="a" style="left:434px;top:413px;" width="10" height="11" viewBox="0 0 10 11"><path d="M2 1h6v5h1v1H1V6h1zM5 7v4" stroke="#000" fill="#000"/></svg>
<svg class="a" style="left:452px;top:414px;" width="9" height="9" viewBox="0 0 9 9"><path fill="none" d="M1 1l7 7M8 1l-7 7" stroke="#000" stroke-width="1.2"/></svg>
<div class="a" style="left:202px;top:428px;width:264px;height:261px;background:#fff;border:1px solid #7F9DB9"></div>
<div class="a" style="left:204px;top:430px;width:83px;height:20px;background:linear-gradient(#FBFAF6,#EDEADC)"></div>
<div class="a" style="left:287px;top:430px;width:64px;height:20px;background:linear-gradient(#F9D99A,#F0BB5E)"></div>
<div class="a" style="left:351px;top:430px;width:31px;height:20px;background:linear-gradient(#FBFAF6,#EDEADC)"></div>
<div class="t " style="left:205px;top:433px;color:#000;">属性名称</div>
<div class="t " style="left:289px;top:433px;color:#6A1570;">属性值</div>
<div class="t " style="left:353px;top:433px;color:#000;">附加</div>
<div class="a" style="left:287px;top:450px;width:64px;height:21px;background:#E1E8F8"></div>
<svg class="a" style="left:204px;top:430px;" width="180" height="104" viewBox="0 0 180 104"><path fill="none" d="M0 20.5H178" stroke="#CFCFCF"/><path fill="none" d="M0 41.5H178" stroke="#CFCFCF"/><path fill="none" d="M0 62.5H178" stroke="#CFCFCF"/><path fill="none" d="M0 83.5H178" stroke="#CFCFCF"/><path fill="none" d="M0 102.5H178" stroke="#CFCFCF"/><path fill="none" d="M83.5 20V102" stroke="#CFCFCF"/><path fill="none" d="M147.5 20V102" stroke="#CFCFCF"/><path fill="none" d="M178.5 20V102" stroke="#CFCFCF"/></svg>
<div class="t " style="left:224px;top:455px;color:#0000FF;">名称</div>
<div class="t " style="left:290px;top:455px;color:#000;">住宅<span class="asc">-1</span></div>
<div class="t " style="left:224px;top:476px;color:#808080;">轴网类型</div>
<div class="t " style="left:290px;top:476px;color:#808080;">正交轴网</div>
<div class="t " style="left:224px;top:497px;color:#0000FF;">备注</div>
<div class="a" style="left:355px;top:476px;width:13px;height:13px;background:linear-gradient(135deg,#DCDCD6,#fff);border:1px solid #1C5180"></div>
<div class="a" style="left:355px;top:497px;width:13px;height:13px;background:linear-gradient(135deg,#DCDCD6,#fff);border:1px solid #1C5180"></div>
<div class="a" style="left:206px;top:517px;width:11px;height:11px;background:#fff;border:1px solid #848284"></div>
<svg class="a" style="left:206px;top:517px;" width="11" height="11" viewBox="0 0 11 11"><path fill="none" d="M2.5 5.5h6M5.5 2.5v6" stroke="#000"/></svg>
<div class="t " style="left:224px;top:517px;color:#000;">显示样式</div>
<div class="a" style="left:466px;top:58px;width:4px;height:632px;background:#ECE9D8"></div>
<div class="a" style="left:470px;top:57px;width:890px;height:78px;background:#ECE9D8"></div>
<div class="a" style="left:470px;top:57px;width:890px;height:26px;background:linear-gradient(#F6F5EF,#E8E5D5);border-bottom:1px solid #D6D2C0"></div>
<div class="a" style="left:470px;top:83px;width:722px;height:26px;background:linear-gradient(#F6F5EF,#E8E5D5);border-bottom:1px solid #D6D2C0"></div>
<div class="a" style="left:1226px;top:83px;width:35px;height:26px;background:linear-gradient(#F6F5EF,#E8E5D5);border-bottom:1px solid #D6D2C0"></div>
<div class="a" style="left:470px;top:109px;width:825px;height:26px;background:linear-gradient(#F6F5EF,#E8E5D5);border-bottom:1px solid #D6D2C0"></div>
<svg class="a" style="left:473px;top:61px;" width="3" height="18" viewBox="0 0 3 18"><rect x="0" y="0" width="2" height="2" fill="#A8A592"/><rect x="1" y="1" width="1" height="1" fill="#fff"/><rect x="0" y="4" width="2" height="2" fill="#A8A592"/><rect x="1" y="5" width="1" height="1" fill="#fff"/><rect x="0" y="8" width="2" height="2" fill="#A8A592"/><rect x="1" y="9" width="1" height="1" fill="#fff"/><rect x="0" y="12" width="2" height="2" fill="#A8A592"/><rect x="1" y="13" width="1" height="1" fill="#fff"/><rect x="0" y="16" width="2" height="2" fill="#A8A592"/><rect x="1" y="17" width="1" height="1" fill="#fff"/></svg>
<div class="a" style="left:479px;top:61px;width:57px;height:17px;background:#ECE9D8;border:1px solid #fff"></div>
<div class="t dis" style="left:482px;top:63px;color:#ACA899;">住宅</div>
<div class="a" style="left:520px;top:63px;width:15px;height:13px;background:#E8E6DC;border:1px solid #E0DED2;border-radius:2px"></div>
<svg class="a" style="left:523px;top:66px;" width="9" height="6" viewBox="0 0 9 6"><path d="M1 1l3.5 3.5L8 1" stroke="#C8C6BA" stroke-width="2" fill="none"/></svg>
<div class="a" style="left:540px;top:61px;width:56px;height:17px;background:#ECE9D8;border:1px solid #fff"></div>
<div class="t dis" style="left:543px;top:63px;color:#ACA899;">首层</div>
<div class="a" style="left:580px;top:63px;width:15px;height:13px;background:#E8E6DC;border:1px solid #E0DED2;border-radius:2px"></div>
<svg class="a" style="left:583px;top:66px;" width="9" height="6" viewBox="0 0 9 6"><path d="M1 1l3.5 3.5L8 1" stroke="#C8C6BA" stroke-width="2" fill="none"/></svg>
<div class="a" style="left:600px;top:61px;width:68px;height:17px;background:#fff;border:1px solid #fff"></div>
<div class="t " style="left:603px;top:63px;color:#000;">轴线</div>
<div class="a" style="left:652px;top:63px;width:15px;height:13px;background:linear-gradient(#C6D3F7,#AEC2F3);border:1px solid #B5C6EE;border-radius:2px"></div>
<svg class="a" style="left:655px;top:66px;" width="9" height="6" viewBox="0 0 9 6"><path d="M1 1l3.5 3.5L8 1" stroke="#4D6185" stroke-width="2" fill="none"/></svg>
<div class="a" style="left:672px;top:61px;width:68px;height:17px;background:#fff;border:1px solid #fff"></div>
<div class="t " style="left:675px;top:63px;color:#000;">轴网</div>
<div class="a" style="left:724px;top:63px;width:15px;height:13px;background:linear-gradient(#C6D3F7,#AEC2F3);border:1px solid #B5C6EE;border-radius:2px"></div>
<svg class="a" style="left:727px;top:66px;" width="9" height="6" viewBox="0 0 9 6"><path d="M1 1l3.5 3.5L8 1" stroke="#4D6185" stroke-width="2" fill="none"/></svg>
<div class="a" style="left:744px;top:61px;width:68px;height:17px;background:#fff;border:1px solid #fff"></div>
<div class="t " style="left:747px;top:63px;color:#000;">住宅<span class="asc">-1</span></div>
<div class="a" style="left:796px;top:63px;width:15px;height:13px;background:linear-gradient(#C6D3F7,#AEC2F3);border:1px solid #B5C6EE;border-radius:2px"></div>
<svg class="a" style="left:799px;top:66px;" width="9" height="6" viewBox="0 0 9 6"><path d="M1 1l3.5 3.5L8 1" stroke="#4D6185" stroke-width="2" fill="none"/></svg>
<div class="a" style="left:816px;top:61px;width:1px;height:18px;background:#C5C2B2"></div>
<div class="a" style="left:817px;top:61px;width:1px;height:18px;background:#fff"></div>
<div class="a" style="left:821px;top:60px;width:50px;height:20px;background:linear-gradient(#FDFDFB,#F0EFE8);border:1px solid #7BA0D4;border-radius:3px"></div>
<svg class="a" style="left:825px;top:63px;" width="17" height="14" viewBox="0 0 17 14"><path d="M1 3h6l1 2h8v8H1z" fill="#F4CE6E" stroke="#9A7A2A"/><path d="M4 11l4-4l3 2l4-4" stroke="#2E7A2E" stroke-width="1.5" fill="none"/></svg>
<div class="t " style="left:844px;top:64px;color:#000;">属性</div>
<div class="a" style="left:871px;top:60px;width:74px;height:20px;background:linear-gradient(#FDFDFB,#F0EFE8);border:1px solid #7BA0D4;border-radius:3px"></div>
<svg class="a" style="left:876px;top:63px;" width="14" height="15" viewBox="0 0 14 15"><path fill="none" d="M1 2h3M1 6h3M1 10h3M1 14h3" stroke="#4A70B0" stroke-dasharray="1 1"/><rect x="6" y="1" width="7" height="13" fill="#fff" stroke="#4A70B0"/><path fill="none" d="M7.5 4h4M7.5 7h4M7.5 10h4" stroke="#4A70B0"/></svg>
<div class="t " style="left:893px;top:64px;color:#000;">构件列表</div>
<svg class="a" style="left:951px;top:61px;" width="15" height="17" viewBox="0 0 15 17"><path d="M2 15l3-1l8-8l-2-2l-8 8z" fill="#E6E4DA" stroke="#BDBBAF"/><path fill="none" d="M10 2l3 3" stroke="#BDBBAF" stroke-width="2"/></svg>
<div class="t dis" style="left:969px;top:64px;color:#ACA899;">拾取构件</div>
<div class="a" style="left:1022px;top:60px;width:1px;height:20px;background:#C5C2B2"></div>
<div class="a" style="left:1023px;top:60px;width:1px;height:20px;background:#fff"></div>
<svg class="a" style="left:1027px;top:61px;" width="3" height="18" viewBox="0 0 3 18"><rect x="0" y="0" width="2" height="2" fill="#A8A592"/><rect x="1" y="1" width="1" height="1" fill="#fff"/><rect x="0" y="4" width="2" height="2" fill="#A8A592"/><rect x="1" y="5" width="1" height="1" fill="#fff"/><rect x="0" y="8" width="2" height="2" fill="#A8A592"/><rect x="1" y="9" width="1" height="1" fill="#fff"/><rect x="0" y="12" width="2" height="2" fill="#A8A592"/><rect x="1" y="13" width="1" height="1" fill="#fff"/><rect x="0" y="16" width="2" height="2" fill="#A8A592"/><rect x="1" y="17" width="1" height="1" fill="#fff"/></svg>
<svg class="a" style="left:1034px;top:61px;" width="16" height="16" viewBox="0 0 16 16"><path fill="none" d="M4 1v15M12 1v15M1 4h15M1 12h15" stroke="#4A78C8" stroke-width="1.3"/><path fill="none" d="M1 15L15 1" stroke="#E09020" stroke-width="1.5"/></svg>
<div class="t " style="left:1053px;top:64px;color:#000;">两点</div>
<svg class="a" style="left:1085px;top:61px;" width="16" height="16" viewBox="0 0 16 16"><path fill="none" d="M4 1v15M12 1v15M1 5h15M1 11h15" stroke="#4A78C8" stroke-width="1.3"/></svg>
<div class="t " style="left:1104px;top:64px;color:#000;">平行</div>
<svg class="a" style="left:1136px;top:61px;" width="17" height="17" viewBox="0 0 17 17"><path fill="none" d="M1 14h15M1 11v6M16 11v6" stroke="#333"/><circle cx="2" cy="8" r="1.3" fill="#2E9A2E"/><circle cx="14" cy="2" r="1.3" fill="#2E9A2E"/></svg>
<div class="t " style="left:1155px;top:64px;color:#000;">长度标注</div>
<svg class="a" style="left:1210px;top:61px;" width="18" height="17" viewBox="0 0 18 17"><path fill="none" d="M1 14l5-5l3 2l7-7" stroke="#333" stroke-dasharray="2 1"/><circle cx="2" cy="15" r="1.5" fill="#2E9A2E"/><circle cx="16" cy="3" r="1.5" fill="#2E9A2E"/></svg>
<div class="t " style="left:1230px;top:64px;color:#000;">对齐标注</div>
<svg class="a" style="left:1285px;top:61px;" width="18" height="17" viewBox="0 0 18 17"><rect x="2" y="4" width="15" height="12" fill="#fff"/><path fill="none" d="M1 2v13M17 2v13M1 6h16" stroke="#222" stroke-width="1.3"/></svg>
<div class="t " style="left:1305px;top:64px;color:#000;">测量距离</div>
<svg class="a" style="left:473px;top:87px;" width="3" height="18" viewBox="0 0 3 18"><rect x="0" y="0" width="2" height="2" fill="#A8A592"/><rect x="1" y="1" width="1" height="1" fill="#fff"/><rect x="0" y="4" width="2" height="2" fill="#A8A592"/><rect x="1" y="5" width="1" height="1" fill="#fff"/><rect x="0" y="8" width="2" height="2" fill="#A8A592"/><rect x="1" y="9" width="1" height="1" fill="#fff"/><rect x="0" y="12" width="2" height="2" fill="#A8A592"/><rect x="1" y="13" width="1" height="1" fill="#fff"/><rect x="0" y="16" width="2" height="2" fill="#A8A592"/><rect x="1" y="17" width="1" height="1" fill="#fff"/></svg>
<svg class="a" style="left:484px;top:88px;" width="12" height="16" viewBox="0 0 12 16"><path d="M1 1v13l3-3l3 5l2-1l-3-5h4z" fill="#F2F1EA" stroke="#B9B7AB"/></svg>
<div class="t dis" style="left:501px;top:90px;color:#ACA899;">选择</div>
<svg class="a" style="left:531px;top:95px;" width="5" height="3" viewBox="0 0 5 3"><path d="M0 0h5L2.5 3z" fill="#C0BEB2"/></svg>
<div class="a" style="left:544px;top:87px;width:1px;height:18px;background:#C5C2B2"></div>
<div class="a" style="left:545px;top:87px;width:1px;height:18px;background:#fff"></div>
<svg class="a" style="left:553px;top:89px;" width="14" height="14" viewBox="0 0 14 14"><rect x="1" y="1" width="12" height="12" fill="none" stroke="#B9B7AB"/><path fill="none" d="M1 1l12 12M13 1L1 13" stroke="#B9B7AB"/></svg>
<div class="t dis" style="left:571px;top:90px;color:#ACA899;">点</div>
<svg class="a" style="left:590px;top:88px;" width="16" height="16" viewBox="0 0 16 16"><path d="M3 8a5 5 0 1 0 5-5" stroke="#B9B7AB" stroke-width="1.5" fill="none"/><path d="M3 3h5v5" stroke="#B9B7AB" fill="none"/></svg>
<div class="t dis" style="left:609px;top:90px;color:#ACA899;">旋转点</div>
<div class="a" style="left:651px;top:87px;width:1px;height:18px;background:#C5C2B2"></div>
<div class="a" style="left:652px;top:87px;width:1px;height:18px;background:#fff"></div>
<svg class="a" style="left:659px;top:89px;" width="16" height="14" viewBox="0 0 16 14"><path fill="none" d="M1 12l14-8M3 6l4 4" stroke="#B9B7AB" stroke-width="1.5"/></svg>
<div class="t dis" style="left:678px;top:90px;color:#ACA899;">修剪轴线</div>
<svg class="a" style="left:734px;top:88px;" width="17" height="16" viewBox="0 0 17 16"><path d="M2 14l8-12l3 3zM1 4h5M10 10h6" stroke="#C4C2B6" stroke-width="1.5" fill="#E2E0D4"/></svg>
<div class="t dis" style="left:753px;top:90px;color:#ACA899;">拉框批量修剪轴线</div>
<svg class="a" style="left:856px;top:95px;" width="5" height="3" viewBox="0 0 5 3"><path d="M0 0h5L2.5 3z" fill="#C0BEB2"/></svg>
<svg class="a" style="left:871px;top:88px;" width="16" height="16" viewBox="0 0 16 16"><path fill="none" d="M4 1v15M1 4h15M12 1v10M4 12h12" stroke="#B9B7AB" stroke-width="1.5"/></svg>
<div class="t dis" style="left:889px;top:90px;color:#ACA899;">恢复轴线</div>
<svg class="a" style="left:944px;top:88px;" width="17" height="16" viewBox="0 0 17 16"><path d="M3 14l9-10l3 3l-9 9H3z" fill="#ECEAE0" stroke="#B9B7AB"/><circle cx="4" cy="13" r="3" fill="none" stroke="#C9C7BB"/></svg>
<div class="t dis" style="left:965px;top:90px;color:#ACA899;">修改轴号</div>
<svg class="a" style="left:1021px;top:88px;" width="17" height="16" viewBox="0 0 17 16"><path d="M1 2h4M3 2v12M1 14h4M6 14l9-10l2 2l-9 9z" stroke="#B9B7AB" fill="none" stroke-width="1.3"/></svg>
<div class="t dis" style="left:1040px;top:90px;color:#ACA899;">修改轴距</div>
<svg class="a" style="left:1096px;top:88px;" width="17" height="16" viewBox="0 0 17 16"><rect x="2" y="5" width="11" height="10" fill="none" stroke="#B9B7AB" stroke-dasharray="2 1"/><circle cx="13" cy="5" r="3" fill="none" stroke="#B9B7AB"/><circle cx="4" cy="13" r="2.5" fill="none" stroke="#B9B7AB"/></svg>
<div class="t dis" style="left:1115px;top:90px;color:#ACA899;">修改轴号位置</div>
<svg class="a" style="left:1230px;top:87px;" width="3" height="18" viewBox="0 0 3 18"><rect x="0" y="0" width="2" height="2" fill="#A8A592"/><rect x="1" y="1" width="1" height="1" fill="#fff"/><rect x="0" y="4" width="2" height="2" fill="#A8A592"/><rect x="1" y="5" width="1" height="1" fill="#fff"/><rect x="0" y="8" width="2" height="2" fill="#A8A592"/><rect x="1" y="9" width="1" height="1" fill="#fff"/><rect x="0" y="12" width="2" height="2" fill="#A8A592"/><rect x="1" y="13" width="1" height="1" fill="#fff"/><rect x="0" y="16" width="2" height="2" fill="#A8A592"/><rect x="1" y="17" width="1" height="1" fill="#fff"/></svg>
<svg class="a" style="left:473px;top:113px;" width="3" height="18" viewBox="0 0 3 18"><rect x="0" y="0" width="2" height="2" fill="#A8A592"/><rect x="1" y="1" width="1" height="1" fill="#fff"/><rect x="0" y="4" width="2" height="2" fill="#A8A592"/><rect x="1" y="5" width="1" height="1" fill="#fff"/><rect x="0" y="8" width="2" height="2" fill="#A8A592"/><rect x="1" y="9" width="1" height="1" fill="#fff"/><rect x="0" y="12" width="2" height="2" fill="#A8A592"/><rect x="1" y="13" width="1" height="1" fill="#fff"/><rect x="0" y="16" width="2" height="2" fill="#A8A592"/><rect x="1" y="17" width="1" height="1" fill="#fff"/></svg>
<svg class="a" style="left:481px;top:114px;" width="17" height="16" viewBox="0 0 17 16"><path d="M2 14h12M5 11l9-9l1 1l-8 9z" stroke="#C0BEB2" stroke-width="1.3" fill="#E4E2D6"/></svg>
<div class="a" style="left:504px;top:113px;width:1px;height:18px;background:#C5C2B2"></div>
<div class="a" style="left:505px;top:113px;width:1px;height:18px;background:#fff"></div>
<svg class="a" style="left:510px;top:114px;" width="16" height="16" viewBox="0 0 16 16"><circle cx="4" cy="4" r="3" fill="none" stroke="#BDBBAF"/><circle cx="9" cy="11" r="3" fill="none" stroke="#BDBBAF"/><circle cx="12" cy="13" r="3" fill="none" stroke="#BDBBAF"/></svg>
<svg class="a" style="left:533px;top:114px;" width="16" height="16" viewBox="0 0 16 16"><path d="M1 14l5-12v12zM10 2l5 12h-5z" fill="none" stroke="#BDBBAF"/></svg>
<div class="a" style="left:556px;top:113px;width:1px;height:18px;background:#C5C2B2"></div>
<div class="a" style="left:557px;top:113px;width:1px;height:18px;background:#fff"></div>
<svg class="a" style="left:562px;top:114px;" width="16" height="16" viewBox="0 0 16 16"><path d="M8 1v14M1 8h14M6 3l2-2l2 2M6 13l2 2l2-2M3 6l-2 2l2 2M13 6l2 2l-2 2" stroke="#BDBBAF" stroke-width="1.5" fill="none"/></svg>
<svg class="a" style="left:586px;top:115px;" width="14" height="14" viewBox="0 0 14 14"><path d="M11 7a4.5 4.5 0 1 1-3-4.3" stroke="#BDBBAF" stroke-width="2" fill="none"/></svg>
<div class="a" style="left:607px;top:113px;width:1px;height:18px;background:#C5C2B2"></div>
<div class="a" style="left:608px;top:113px;width:1px;height:18px;background:#fff"></div>
<svg class="a" style="left:614px;top:115px;" width="17" height="14" viewBox="0 0 17 14"><path d="M1 7h8M12 1v12M15 1v12M9 4l3 3l-3 3" stroke="#BDBBAF" stroke-width="1.3" fill="none"/></svg>
<div class="t dis" style="left:634px;top:116px;color:#ACA899;">延伸</div>
<svg class="a" style="left:665px;top:115px;" width="16" height="14" viewBox="0 0 16 14"><path fill="none" d="M1 7h14M6 1v12M10 1v12" stroke="#BDBBAF" stroke-width="1.3"/></svg>
<div class="t dis" style="left:684px;top:116px;color:#ACA899;">修剪</div>
<div class="a" style="left:714px;top:113px;width:1px;height:18px;background:#C5C2B2"></div>
<div class="a" style="left:715px;top:113px;width:1px;height:18px;background:#fff"></div>
<svg class="a" style="left:722px;top:115px;" width="17" height="14" viewBox="0 0 17 14"><path d="M1 11h15M1 13h15M3 3l3-2M3 3l3 2M3 3h4M11 3h4" stroke="#BDBBAF" stroke-width="1.3" fill="none"/></svg>
<div class="t dis" style="left:741px;top:116px;color:#ACA899;">打断</div>
<svg class="a" style="left:769px;top:121px;" width="5" height="3" viewBox="0 0 5 3"><path d="M0 0h5L2.5 3z" fill="#C0BEB2"/></svg>
<svg class="a" style="left:781px;top:115px;" width="17" height="14" viewBox="0 0 17 14"><path d="M1 11h15M1 13h15M3 3l3-2M3 3l3 2M3 3h4M11 3h4" stroke="#BDBBAF" stroke-width="1.3" fill="none"/></svg>
<div class="t dis" style="left:801px;top:116px;color:#ACA899;">合并</div>
<svg class="a" style="left:831px;top:114px;" width="17" height="16" viewBox="0 0 17 16"><path d="M1 14h15M2 10l12-6M6 14l9-12" stroke="#BDBBAF" stroke-width="1.3" fill="none"/></svg>
<div class="t dis" style="left:851px;top:116px;color:#ACA899;">分割</div>
<div class="a" style="left:883px;top:113px;width:1px;height:18px;background:#C5C2B2"></div>
<div class="a" style="left:884px;top:113px;width:1px;height:18px;background:#fff"></div>
<svg class="a" style="left:890px;top:114px;" width="15" height="16" viewBox="0 0 15 16"><path d="M2 1v14M5 8h8M5 12h8l-2-2" stroke="#BDBBAF" stroke-width="1.5" fill="none"/></svg>
<div class="t dis" style="left:909px;top:116px;color:#ACA899;">对齐</div>
<svg class="a" style="left:936px;top:121px;" width="5" height="3" viewBox="0 0 5 3"><path d="M0 0h5L2.5 3z" fill="#C0BEB2"/></svg>
<svg class="a" style="left:950px;top:115px;" width="16" height="14" viewBox="0 0 16 14"><path d="M3 12q-3-4 1-6q1-5 6-3q5-1 4 5q2 4-2 4z" fill="none" stroke="#BDBBAF" stroke-width="1.3"/></svg>
<div class="t dis" style="left:968px;top:116px;color:#ACA899;">偏移</div>
<svg class="a" style="left:999px;top:114px;" width="15" height="16" viewBox="0 0 15 16"><path d="M2 2h7l3 3v9H2zM6 8h6l-2 2" stroke="#BDBBAF" fill="none"/></svg>
<div class="t dis" style="left:1019px;top:116px;color:#ACA899;">拉伸</div>
<div class="a" style="left:1049px;top:113px;width:1px;height:18px;background:#C5C2B2"></div>
<div class="a" style="left:1050px;top:113px;width:1px;height:18px;background:#fff"></div>
<svg class="a" style="left:1055px;top:114px;" width="17" height="16" viewBox="0 0 17 16"><path d="M6 10l8-8l2 2l-8 8z" fill="#D8D6CA"/><path fill="none" d="M1 14h3M6 14h4M12 14h3" stroke="#BDBBAF" stroke-width="2"/><rect x="5" y="12" width="3" height="3" fill="#BDBBAF"/></svg>
<div class="t dis" style="left:1076px;top:116px;color:#ACA899;">设置夹点</div>
<div class="a" style="left:1130px;top:113px;width:1px;height:18px;background:#C5C2B2"></div>
<div class="a" style="left:1131px;top:113px;width:1px;height:18px;background:#fff"></div>
<svg class="a" style="left:1137px;top:114px;" width="16" height="16" viewBox="0 0 16 16"><path d="M2 15V6l4-4h9" stroke="#BDBBAF" stroke-width="1.3" fill="none"/></svg>
<div class="t dis" style="left:1156px;top:116px;color:#ACA899;">倒角</div>
<svg class="a" style="left:1188px;top:114px;" width="16" height="16" viewBox="0 0 16 16"><path d="M2 15V9q0-7 7-7h6" stroke="#BDBBAF" stroke-width="1.3" fill="none"/></svg>
<div class="t dis" style="left:1208px;top:116px;color:#ACA899;">圆角</div>
<div class="a" style="left:1238px;top:113px;width:1px;height:18px;background:#C5C2B2"></div>
<div class="a" style="left:1239px;top:113px;width:1px;height:18px;background:#fff"></div>
<svg class="a" style="left:1245px;top:114px;" width="16" height="16" viewBox="0 0 16 16"><path d="M2 3h9M2 3v12h13V6" stroke="#BDBBAF" stroke-width="1.3" fill="none"/><circle cx="13" cy="4" r="2.5" fill="none" stroke="#BDBBAF"/></svg>
<div class="t dis" style="left:1266px;top:116px;color:#ACA899;">闭合</div>
<svg class="a" style="left:470px;top:135px" width="890" height="528" viewBox="470 135 890 528"><rect x="470" y="135" width="890" height="528" fill="#000"/><polygon points="497,663 569,609 740,647 745,663" fill="#8C8C8C" /><polygon points="566,612 726,647 724,656 556,620" fill="#C0C0C0" /><polygon points="600,645 680,660 678,663 590,663" fill="#B4B4B4" /><line x1="540" y1="630" x2="740" y2="663" stroke="#FF0000" stroke-width="1" /><line x1="520" y1="645" x2="640" y2="663" stroke="#FF0000" stroke-width="1" /><line x1="566" y1="617" x2="745" y2="655" stroke="#FF0000" stroke-width="1" /><line x1="600" y1="622" x2="540" y2="663" stroke="#FF0000" stroke-width="1" /><line x1="645" y1="632" x2="575" y2="663" stroke="#FF0000" stroke-width="1" /><line x1="690" y1="642" x2="625" y2="663" stroke="#FF0000" stroke-width="1" /><line x1="735" y1="652" x2="705" y2="663" stroke="#FF0000" stroke-width="1" /><polygon points="565,622 568,622 568,631 565,631" fill="#9000F0" /><polygon points="587,630 590,630 590,639 587,639" fill="#9000F0" /><polygon points="630,645 633,645 633,654 630,654" fill="#9000F0" /><polygon points="680,655 683,655 683,664 680,664" fill="#9000F0" /><line x1="600" y1="650" x2="640" y2="630" stroke="#00FF00" stroke-width="2" /><line x1="497" y1="663" x2="569" y2="609" stroke="#FFFFFF" stroke-width="2.5" /><polygon points="590,534 656,487 864,542 864,531 915,545 915,663 900,663 900,612 746,571 738,590 576,552 572,546" fill="#8C8C8C" /><polygon points="590,531 656,485 657,493 592,539" fill="#6868A8" /><polygon points="656,486 856,541 854,549 656,494" fill="#A8A8F4" /><line x1="660" y1="497" x2="920" y2="568.5" stroke="#00FF00" stroke-width="1.8" /><line x1="646.576" y1="506.5" x2="906.576" y2="578" stroke="#00FF00" stroke-width="1.8" /><line x1="633.152" y1="516" x2="893.152" y2="587.5" stroke="#00FF00" stroke-width="1.8" /><line x1="619.728" y1="525.5" x2="879.728" y2="597" stroke="#00FF00" stroke-width="1.8" /><line x1="606.304" y1="535" x2="866.304" y2="606.5" stroke="#00FF00" stroke-width="1.8" /><line x1="592.88" y1="544.5" x2="852.88" y2="616" stroke="#00FF00" stroke-width="1.8" /><line x1="579.457" y1="554" x2="839.457" y2="625.5" stroke="#00FF00" stroke-width="1.8" /><line x1="566.033" y1="563.5" x2="826.033" y2="635" stroke="#00FF00" stroke-width="1.8" /><line x1="552.609" y1="573" x2="812.609" y2="644.5" stroke="#00FF00" stroke-width="1.8" /><line x1="665" y1="496.475" x2="570" y2="564.475" stroke="#00FF00" stroke-width="1.5" /><line x1="686" y1="502.25" x2="591" y2="570.25" stroke="#00FF00" stroke-width="1.5" /><line x1="707" y1="508.025" x2="612" y2="576.025" stroke="#00FF00" stroke-width="1.5" /><line x1="728" y1="513.8" x2="633" y2="581.8" stroke="#00FF00" stroke-width="1.5" /><line x1="749" y1="519.575" x2="654" y2="587.575" stroke="#00FF00" stroke-width="1.5" /><line x1="770" y1="525.35" x2="675" y2="593.35" stroke="#00FF00" stroke-width="1.5" /><line x1="791" y1="531.125" x2="696" y2="599.125" stroke="#00FF00" stroke-width="1.5" /><line x1="812" y1="536.9" x2="717" y2="604.9" stroke="#00FF00" stroke-width="1.5" /><line x1="833" y1="542.675" x2="738" y2="610.675" stroke="#00FF00" stroke-width="1.5" /><line x1="854" y1="548.45" x2="759" y2="616.45" stroke="#00FF00" stroke-width="1.5" /><line x1="875" y1="554.225" x2="780" y2="622.225" stroke="#00FF00" stroke-width="1.5" /><line x1="896" y1="560" x2="801" y2="628" stroke="#00FF00" stroke-width="1.5" /><line x1="917" y1="565.775" x2="822" y2="633.775" stroke="#00FF00" stroke-width="1.5" /><line x1="938" y1="571.55" x2="843" y2="639.55" stroke="#00FF00" stroke-width="1.5" /><line x1="959" y1="577.325" x2="864" y2="645.325" stroke="#00FF00" stroke-width="1.5" /><line x1="980" y1="583.1" x2="885" y2="651.1" stroke="#00FF00" stroke-width="1.5" /><line x1="1001" y1="588.875" x2="906" y2="656.875" stroke="#00FF00" stroke-width="1.5" /><line x1="620" y1="520" x2="820" y2="575" stroke="#00A800" stroke-width="1.5" /><line x1="623" y1="532" x2="823" y2="587" stroke="#00A800" stroke-width="1.5" /><line x1="626" y1="544" x2="826" y2="599" stroke="#00A800" stroke-width="1.5" /><line x1="629" y1="556" x2="829" y2="611" stroke="#00A800" stroke-width="1.5" /><line x1="632" y1="568" x2="832" y2="623" stroke="#00A800" stroke-width="1.5" /><line x1="635" y1="580" x2="835" y2="635" stroke="#00A800" stroke-width="1.5" /><line x1="580" y1="548" x2="740" y2="590" stroke="#00FF00" stroke-width="3" /><line x1="575" y1="555" x2="738" y2="598" stroke="#009800" stroke-width="2" /><polygon points="665,520 790,554 786,558 661,524" fill="#B4B4B4" /><polygon points="655,545 700,556 694,566 650,555" fill="#B8B8B8" /><polygon points="735,545 760,552 752,566 728,560" fill="#A0A0A0" /><polygon points="640,530 642,530 642,540 640,540" fill="#9000F0" /><polygon points="646,533 648,533 648,543 646,543" fill="#9000F0" /><polygon points="652,530 654,530 654,540 652,540" fill="#9000F0" /><polygon points="713,552 715,552 715,562 713,562" fill="#9000F0" /><polygon points="720,556 722,556 722,566 720,566" fill="#9000F0" /><polygon points="727,553 729,553 729,563 727,563" fill="#9000F0" /><polygon points="856,531 915,546 915,574 856,559" fill="#8C8C8C" /><polygon points="864,531 915,545 915,552 864,538" fill="#A8A8F4" /><polygon points="862,552 900,561 900,568 862,559" fill="#000000" /><line x1="856" y1="545" x2="915" y2="560" stroke="#00FF00" stroke-width="2" /><line x1="858" y1="566" x2="913" y2="580" stroke="#00FF00" stroke-width="2" /><polygon points="851,548 854,548 854,565 851,565" fill="#9000F0" /><polygon points="862,551 865,551 865,562 862,562" fill="#9000F0" /><polygon points="898,556 901,556 901,572 898,572" fill="#9000F0" /><polygon points="576,552 741,591 726,647 565,611" fill="#6F5F00" /><polygon points="576,552 741,591 738,603 573,566" fill="#8C8C8C" /><polygon points="573,566 738,603 736,610 571,573" fill="#9E9E9E" /><polygon points="576,552 586,554.36 583,615.494 573,613.354" fill="#C8C8C8" /><polygon points="591,555.54 600,557.664 597,618.49 588,616.564" fill="#C8C8C8" /><polygon points="611,560.26 618,561.912 615,622.342 608,620.844" fill="#C8C8C8" /><polygon points="624,563.328 632,565.216 629,625.338 621,623.626" fill="#C8C8C8" /><polygon points="640,567.104 650,569.464 647,629.19 637,627.05" fill="#C8C8C8" /><polygon points="655,570.644 665,573.004 662,632.4 652,630.26" fill="#C8C8C8" /><polygon points="668,573.712 676,575.6 673,634.754 665,633.042" fill="#C8C8C8" /><polygon points="681,576.78 689,578.668 686,637.536 678,635.824" fill="#C8C8C8" /><polygon points="697,580.556 706,582.68 703,641.174 694,639.248" fill="#C8C8C8" /><polygon points="712,584.096 723,586.692 720,644.812 709,642.458" fill="#C8C8C8" /><polygon points="735,589.524 740,590.704 737,648.45 732,647.38" fill="#C8C8C8" /><line x1="570" y1="560" x2="740" y2="598.2" stroke="#00FF00" stroke-width="2" /><line x1="570" y1="570" x2="740" y2="607.2" stroke="#00FF00" stroke-width="2" /><line x1="570" y1="592" x2="740" y2="627" stroke="#00FF00" stroke-width="3" /><line x1="570" y1="602" x2="740" y2="636" stroke="#009800" stroke-width="2" /><polygon points="600,580 612,583 612,586 600,583" fill="#FFE800" /><polygon points="657,576 662,577 660,592 655,591" fill="#FFE800" /><polygon points="735,596 741,598 737,646 731,644" fill="#FFE800" /><polygon points="741,591 746,592 740,648 731,646" fill="#5A4C00" /><polygon points="746,572 915,614 915,663 740,663" fill="#8C8C8C" /><polygon points="742,605 915,648 915,663 738,663" fill="#6F5F00" /><polygon points="746,571 905,610 905,618 746,579" fill="#A8A8F4" /><line x1="742" y1="590" x2="905" y2="632" stroke="#00FF00" stroke-width="2.5" /><line x1="742" y1="612" x2="905" y2="652" stroke="#00FF00" stroke-width="2.5" /><line x1="746" y1="600" x2="905" y2="641" stroke="#009800" stroke-width="1.5" /><polygon points="762,643 800,651 798,663 760,663" fill="#00FF00" /><polygon points="820,618 897,637 897,645 820,626" fill="#FFE800" /><polygon points="817,571 861,582 861,588 817,577" fill="#A8A8F4" /><polygon points="757,582 762,582 761,623 756,623" fill="#9000F0" /><polygon points="802,591 807,591 806,633 801,633" fill="#9000F0" /><polygon points="849,588 854,588 853,633 848,633" fill="#9000F0" /><polygon points="892,626 897,626 896,663 891,663" fill="#9000F0" /><polygon points="751,610 756,610 755,663 750,663" fill="#9000F0" /><polygon points="764,617 769,617 768,655 763,655" fill="#9000F0" /><polygon points="786,623 791,623 790,645 785,645" fill="#9000F0" /><polygon points="799,628 804,628 803,663 798,663" fill="#9000F0" /><polygon points="835,634 840,634 839,655 834,655" fill="#9000F0" /><polygon points="851,634 856,634 855,663 850,663" fill="#9000F0" /><polygon points="881,636 886,636 885,663 880,663" fill="#9000F0" /><polygon points="1060,600 1136,622 1138,628 1071,663 1040,663" fill="#8C8C8C" /><polygon points="1077,604 1136,621 1136,630 1077,612" fill="#A8A8F4" /><polygon points="1136,624 1139,628 1075,663 1068,663" fill="#6868A8" /><line x1="1077" y1="618" x2="1120" y2="630" stroke="#00FF00" stroke-width="2" /><line x1="1077" y1="627" x2="1120" y2="639" stroke="#00FF00" stroke-width="2" /><line x1="1077" y1="636" x2="1120" y2="648" stroke="#00FF00" stroke-width="2" /><line x1="1077" y1="645" x2="1120" y2="657" stroke="#00FF00" stroke-width="2" /><line x1="1077" y1="654" x2="1120" y2="666" stroke="#00FF00" stroke-width="2" /><line x1="1138" y1="632" x2="1085" y2="663" stroke="#00FF00" stroke-width="2" /><polygon points="1100,640 1104,640 1104,663 1100,663" fill="#9000F0" /><polygon points="1117,630 1121,630 1121,655 1117,655" fill="#9000F0" /><polygon points="1095,650 1133,651 1125,663 1090,663" fill="#8C8C8C" /><line x1="1090" y1="655" x2="1133" y2="652" stroke="#00FF00" stroke-width="2" /><clipPath id="tf"><polygon points="953,213 1104.32,250 1053.11,663 899.9,663"/></clipPath><clipPath id="ts"><polygon points="1101.94,245 1127.9,190 1069.25,663 1050.11,663"/></clipPath><g clip-path="url(#ts)"><polygon points="1101.94,245 1127.9,190 1069.25,663 1050.11,663" fill="#8C8C8C" /><polygon points="1108.78,150 1112.78,150 1045.06,700 1041.06,700" fill="#7A7A7A" /><polygon points="1127.36,187.2 1113.36,199.2 1114.36,203.2 1125.36,203.2" fill="#009800" /><line x1="1114.36" y1="200.2" x2="1127.36" y2="188.2" stroke="#00FF00" stroke-width="2" /><polygon points="1125.33,203.6 1111.33,215.6 1112.33,219.6 1123.33,219.6" fill="#009800" /><line x1="1112.33" y1="216.6" x2="1125.33" y2="204.6" stroke="#00FF00" stroke-width="2" /><polygon points="1123.3,220 1109.3,232 1110.3,236 1121.3,236" fill="#009800" /><line x1="1110.3" y1="233" x2="1123.3" y2="221" stroke="#00FF00" stroke-width="2" /><polygon points="1121.26,236.4 1107.26,248.4 1108.26,252.4 1119.26,252.4" fill="#009800" /><line x1="1108.26" y1="249.4" x2="1121.26" y2="237.4" stroke="#00FF00" stroke-width="2" /><polygon points="1119.23,252.8 1105.23,264.8 1106.23,268.8 1117.23,268.8" fill="#009800" /><line x1="1106.23" y1="265.8" x2="1119.23" y2="253.8" stroke="#00FF00" stroke-width="2" /><polygon points="1117.2,269.2 1103.2,281.2 1104.2,285.2 1115.2,285.2" fill="#009800" /><line x1="1104.2" y1="282.2" x2="1117.2" y2="270.2" stroke="#00FF00" stroke-width="2" /><polygon points="1115.16,285.6 1101.16,297.6 1102.16,301.6 1113.16,301.6" fill="#009800" /><line x1="1102.16" y1="298.6" x2="1115.16" y2="286.6" stroke="#00FF00" stroke-width="2" /><polygon points="1113.13,302 1099.13,314 1100.13,318 1111.13,318" fill="#009800" /><line x1="1100.13" y1="315" x2="1113.13" y2="303" stroke="#00FF00" stroke-width="2" /><polygon points="1111.09,318.4 1097.09,330.4 1098.09,334.4 1109.09,334.4" fill="#009800" /><line x1="1098.09" y1="331.4" x2="1111.09" y2="319.4" stroke="#00FF00" stroke-width="2" /><polygon points="1109.06,334.8 1095.06,346.8 1096.06,350.8 1107.06,350.8" fill="#009800" /><line x1="1096.06" y1="347.8" x2="1109.06" y2="335.8" stroke="#00FF00" stroke-width="2" /><polygon points="1107.03,351.2 1093.03,363.2 1094.03,367.2 1105.03,367.2" fill="#009800" /><line x1="1094.03" y1="364.2" x2="1107.03" y2="352.2" stroke="#00FF00" stroke-width="2" /><polygon points="1104.99,367.6 1090.99,379.6 1091.99,383.6 1102.99,383.6" fill="#009800" /><line x1="1091.99" y1="380.6" x2="1104.99" y2="368.6" stroke="#00FF00" stroke-width="2" /><polygon points="1102.96,384 1088.96,396 1089.96,400 1100.96,400" fill="#009800" /><line x1="1089.96" y1="397" x2="1102.96" y2="385" stroke="#00FF00" stroke-width="2" /><polygon points="1100.93,400.4 1086.93,412.4 1087.93,416.4 1098.93,416.4" fill="#009800" /><line x1="1087.93" y1="413.4" x2="1100.93" y2="401.4" stroke="#00FF00" stroke-width="2" /><polygon points="1098.89,416.8 1084.89,428.8 1085.89,432.8 1096.89,432.8" fill="#009800" /><line x1="1085.89" y1="429.8" x2="1098.89" y2="417.8" stroke="#00FF00" stroke-width="2" /><polygon points="1096.86,433.2 1082.86,445.2 1083.86,449.2 1094.86,449.2" fill="#009800" /><line x1="1083.86" y1="446.2" x2="1096.86" y2="434.2" stroke="#00FF00" stroke-width="2" /><polygon points="1094.83,449.6 1080.83,461.6 1081.83,465.6 1092.83,465.6" fill="#009800" /><line x1="1081.83" y1="462.6" x2="1094.83" y2="450.6" stroke="#00FF00" stroke-width="2" /><polygon points="1092.79,466 1078.79,478 1079.79,482 1090.79,482" fill="#009800" /><line x1="1079.79" y1="479" x2="1092.79" y2="467" stroke="#00FF00" stroke-width="2" /><polygon points="1090.76,482.4 1076.76,494.4 1077.76,498.4 1088.76,498.4" fill="#009800" /><line x1="1077.76" y1="495.4" x2="1090.76" y2="483.4" stroke="#00FF00" stroke-width="2" /><polygon points="1088.72,498.8 1074.72,510.8 1075.72,514.8 1086.72,514.8" fill="#009800" /><line x1="1075.72" y1="511.8" x2="1088.72" y2="499.8" stroke="#00FF00" stroke-width="2" /><polygon points="1086.69,515.2 1072.69,527.2 1073.69,531.2 1084.69,531.2" fill="#009800" /><line x1="1073.69" y1="528.2" x2="1086.69" y2="516.2" stroke="#00FF00" stroke-width="2" /><polygon points="1084.66,531.6 1070.66,543.6 1071.66,547.6 1082.66,547.6" fill="#009800" /><line x1="1071.66" y1="544.6" x2="1084.66" y2="532.6" stroke="#00FF00" stroke-width="2" /><polygon points="1082.62,548 1068.62,560 1069.62,564 1080.62,564" fill="#009800" /><line x1="1069.62" y1="561" x2="1082.62" y2="549" stroke="#00FF00" stroke-width="2" /><polygon points="1080.59,564.4 1066.59,576.4 1067.59,580.4 1078.59,580.4" fill="#009800" /><line x1="1067.59" y1="577.4" x2="1080.59" y2="565.4" stroke="#00FF00" stroke-width="2" /><polygon points="1078.56,580.8 1064.56,592.8 1065.56,596.8 1076.56,596.8" fill="#009800" /><line x1="1065.56" y1="593.8" x2="1078.56" y2="581.8" stroke="#00FF00" stroke-width="2" /><polygon points="1076.52,597.2 1062.52,609.2 1063.52,613.2 1074.52,613.2" fill="#009800" /><line x1="1063.52" y1="610.2" x2="1076.52" y2="598.2" stroke="#00FF00" stroke-width="2" /><polygon points="1074.49,613.6 1060.49,625.6 1061.49,629.6 1072.49,629.6" fill="#009800" /><line x1="1061.49" y1="626.6" x2="1074.49" y2="614.6" stroke="#00FF00" stroke-width="2" /><polygon points="1072.46,630 1058.46,642 1059.46,646 1070.46,646" fill="#009800" /><line x1="1059.46" y1="643" x2="1072.46" y2="631" stroke="#00FF00" stroke-width="2" /><polygon points="1070.42,646.4 1056.42,658.4 1057.42,662.4 1068.42,662.4" fill="#009800" /><line x1="1057.42" y1="659.4" x2="1070.42" y2="647.4" stroke="#00FF00" stroke-width="2" /><polygon points="1068.39,662.8 1054.39,674.8 1055.39,678.8 1066.39,678.8" fill="#009800" /><line x1="1055.39" y1="675.8" x2="1068.39" y2="663.8" stroke="#00FF00" stroke-width="2" /><polygon points="1129.97,150 1133.97,150 1065.84,700 1061.84,700" fill="#C8C8C8" /><polygon points="1121.9,150 1124.9,150 1056.93,700 1053.93,700" fill="#A8A8A8" /></g><g clip-path="url(#tf)"><polygon points="953,213 1104.32,250 1053.11,663 899.9,663" fill="#8C8C8C" /><polygon points="958.483,150 963.483,150 898.621,700 893.621,700" fill="#C8C8C8" /><polygon points="977.648,150 988.648,150 923.422,700 912.422,700" fill="#C8C8C8" /><polygon points="992.779,150 997.779,150 932.265,700 927.265,700" fill="#C8C8C8" /><polygon points="1001.86,150 1006.86,150 941.171,700 936.171,700" fill="#C8C8C8" /><polygon points="1012.95,150 1018.95,150 953.056,700 947.056,700" fill="#C8C8C8" /><polygon points="1023.04,150 1028.04,150 961.951,700 956.951,700" fill="#C8C8C8" /><polygon points="1043.22,150 1046.22,150 979.742,700 976.742,700" fill="#C8C8C8" /><polygon points="1049.27,150 1054.27,150 987.679,700 982.679,700" fill="#C8C8C8" /><polygon points="1059.35,150 1064.35,150 997.574,700 992.574,700" fill="#C8C8C8" /><polygon points="1070.45,150 1078.45,150 1011.46,700 1003.46,700" fill="#C8C8C8" /><polygon points="1085.58,150 1095.58,150 1028.3,700 1018.3,700" fill="#C8C8C8" /><polygon points="1101.72,150 1107.72,150 1040.13,700 1034.13,700" fill="#C8C8C8" /><polygon points="1028.08,150 1038.08,150 971.899,700 961.899,700" fill="#787878" /><polygon points="960.336,194.2 971.336,196.2 961.336,205.2" fill="#000" /><line x1="952.336" y1="192.2" x2="973.336" y2="197.2" stroke="#009800" stroke-width="3.5" /><line x1="972.336" y1="199.2" x2="961.336" y2="206.2" stroke="#00FF00" stroke-width="1.5" /><line x1="975.336" y1="194.2" x2="1025.34" y2="205.85" stroke="#009800" stroke-width="4" stroke-dasharray="16 3 22 9"/><line x1="985.336" y1="196.2" x2="1010.34" y2="202.025" stroke="#00FF00" stroke-width="2.5" /><line x1="991.336" y1="204.2" x2="1011.34" y2="207.2" stroke="#00FF00" stroke-width="2" /><line x1="979.336" y1="202.2" x2="985.336" y2="207.2" stroke="#00FF00" stroke-width="1.5" /><line x1="1037.34" y1="196.2" x2="1120.34" y2="215.539" stroke="#009800" stroke-width="4" stroke-dasharray="24 5 30 6 18"/><line x1="1047.34" y1="198.2" x2="1085.34" y2="207.054" stroke="#00FF00" stroke-width="2.5" /><line x1="1055.34" y1="205.2" x2="1077.34" y2="209.2" stroke="#00FF00" stroke-width="2" /><line x1="1093.34" y1="205.2" x2="1109.34" y2="209.2" stroke="#00FF00" stroke-width="2" /><line x1="1050.34" y1="203.2" x2="1054.34" y2="209.2" stroke="#00FF00" stroke-width="1.5" /><line x1="1021.34" y1="195.2" x2="1027.34" y2="199.2" stroke="#00FF00" stroke-width="2.5" /><line x1="1017.34" y1="203.2" x2="1023.34" y2="205.2" stroke="#00FF00" stroke-width="2.5" /><line x1="1029.34" y1="201.2" x2="1025.34" y2="206.2" stroke="#00FF00" stroke-width="1.5" /><polygon points="958.401,210.6 969.401,212.6 959.401,221.6" fill="#000" /><line x1="950.401" y1="208.6" x2="971.401" y2="213.6" stroke="#009800" stroke-width="3.5" /><line x1="970.401" y1="215.6" x2="959.401" y2="222.6" stroke="#00FF00" stroke-width="1.5" /><line x1="973.401" y1="210.6" x2="1023.4" y2="222.25" stroke="#009800" stroke-width="4" stroke-dasharray="16 3 22 9"/><line x1="983.401" y1="212.6" x2="1008.4" y2="218.425" stroke="#00FF00" stroke-width="2.5" /><line x1="989.401" y1="220.6" x2="1009.4" y2="223.6" stroke="#00FF00" stroke-width="2" /><line x1="977.401" y1="218.6" x2="983.401" y2="223.6" stroke="#00FF00" stroke-width="1.5" /><line x1="1035.4" y1="212.6" x2="1118.4" y2="231.939" stroke="#009800" stroke-width="4" stroke-dasharray="24 5 30 6 18"/><line x1="1045.4" y1="214.6" x2="1083.4" y2="223.454" stroke="#00FF00" stroke-width="2.5" /><line x1="1053.4" y1="221.6" x2="1075.4" y2="225.6" stroke="#00FF00" stroke-width="2" /><line x1="1091.4" y1="221.6" x2="1107.4" y2="225.6" stroke="#00FF00" stroke-width="2" /><line x1="1048.4" y1="219.6" x2="1052.4" y2="225.6" stroke="#00FF00" stroke-width="1.5" /><line x1="1019.4" y1="211.6" x2="1025.4" y2="215.6" stroke="#00FF00" stroke-width="2.5" /><line x1="1015.4" y1="219.6" x2="1021.4" y2="221.6" stroke="#00FF00" stroke-width="2.5" /><line x1="1027.4" y1="217.6" x2="1023.4" y2="222.6" stroke="#00FF00" stroke-width="1.5" /><polygon points="956.466,227 967.466,229 957.466,238" fill="#000" /><line x1="948.466" y1="225" x2="969.466" y2="230" stroke="#009800" stroke-width="3.5" /><line x1="968.466" y1="232" x2="957.466" y2="239" stroke="#00FF00" stroke-width="1.5" /><line x1="971.466" y1="227" x2="1021.47" y2="238.65" stroke="#009800" stroke-width="4" stroke-dasharray="16 3 22 9"/><line x1="981.466" y1="229" x2="1006.47" y2="234.825" stroke="#00FF00" stroke-width="2.5" /><line x1="987.466" y1="237" x2="1007.47" y2="240" stroke="#00FF00" stroke-width="2" /><line x1="975.466" y1="235" x2="981.466" y2="240" stroke="#00FF00" stroke-width="1.5" /><line x1="1033.47" y1="229" x2="1116.47" y2="248.339" stroke="#009800" stroke-width="4" stroke-dasharray="24 5 30 6 18"/><line x1="1043.47" y1="231" x2="1081.47" y2="239.854" stroke="#00FF00" stroke-width="2.5" /><line x1="1051.47" y1="238" x2="1073.47" y2="242" stroke="#00FF00" stroke-width="2" /><line x1="1089.47" y1="238" x2="1105.47" y2="242" stroke="#00FF00" stroke-width="2" /><line x1="1046.47" y1="236" x2="1050.47" y2="242" stroke="#00FF00" stroke-width="1.5" /><line x1="1017.47" y1="228" x2="1023.47" y2="232" stroke="#00FF00" stroke-width="2.5" /><line x1="1013.47" y1="236" x2="1019.47" y2="238" stroke="#00FF00" stroke-width="2.5" /><line x1="1025.47" y1="234" x2="1021.47" y2="239" stroke="#00FF00" stroke-width="1.5" /><polygon points="954.531,243.4 965.531,245.4 955.531,254.4" fill="#000" /><line x1="946.531" y1="241.4" x2="967.531" y2="246.4" stroke="#009800" stroke-width="3.5" /><line x1="966.531" y1="248.4" x2="955.531" y2="255.4" stroke="#00FF00" stroke-width="1.5" /><line x1="969.531" y1="243.4" x2="1019.53" y2="255.05" stroke="#009800" stroke-width="4" stroke-dasharray="16 3 22 9"/><line x1="979.531" y1="245.4" x2="1004.53" y2="251.225" stroke="#00FF00" stroke-width="2.5" /><line x1="985.531" y1="253.4" x2="1005.53" y2="256.4" stroke="#00FF00" stroke-width="2" /><line x1="973.531" y1="251.4" x2="979.531" y2="256.4" stroke="#00FF00" stroke-width="1.5" /><line x1="1031.53" y1="245.4" x2="1114.53" y2="264.739" stroke="#009800" stroke-width="4" stroke-dasharray="24 5 30 6 18"/><line x1="1041.53" y1="247.4" x2="1079.53" y2="256.254" stroke="#00FF00" stroke-width="2.5" /><line x1="1049.53" y1="254.4" x2="1071.53" y2="258.4" stroke="#00FF00" stroke-width="2" /><line x1="1087.53" y1="254.4" x2="1103.53" y2="258.4" stroke="#00FF00" stroke-width="2" /><line x1="1044.53" y1="252.4" x2="1048.53" y2="258.4" stroke="#00FF00" stroke-width="1.5" /><line x1="1015.53" y1="244.4" x2="1021.53" y2="248.4" stroke="#00FF00" stroke-width="2.5" /><line x1="1011.53" y1="252.4" x2="1017.53" y2="254.4" stroke="#00FF00" stroke-width="2.5" /><line x1="1023.53" y1="250.4" x2="1019.53" y2="255.4" stroke="#00FF00" stroke-width="1.5" /><polygon points="952.596,259.8 963.596,261.8 953.596,270.8" fill="#000" /><line x1="944.596" y1="257.8" x2="965.596" y2="262.8" stroke="#009800" stroke-width="3.5" /><line x1="964.596" y1="264.8" x2="953.596" y2="271.8" stroke="#00FF00" stroke-width="1.5" /><line x1="967.596" y1="259.8" x2="1017.6" y2="271.45" stroke="#009800" stroke-width="4" stroke-dasharray="16 3 22 9"/><line x1="977.596" y1="261.8" x2="1002.6" y2="267.625" stroke="#00FF00" stroke-width="2.5" /><line x1="983.596" y1="269.8" x2="1003.6" y2="272.8" stroke="#00FF00" stroke-width="2" /><line x1="971.596" y1="267.8" x2="977.596" y2="272.8" stroke="#00FF00" stroke-width="1.5" /><line x1="1029.6" y1="261.8" x2="1112.6" y2="281.139" stroke="#009800" stroke-width="4" stroke-dasharray="24 5 30 6 18"/><line x1="1039.6" y1="263.8" x2="1077.6" y2="272.654" stroke="#00FF00" stroke-width="2.5" /><line x1="1047.6" y1="270.8" x2="1069.6" y2="274.8" stroke="#00FF00" stroke-width="2" /><line x1="1085.6" y1="270.8" x2="1101.6" y2="274.8" stroke="#00FF00" stroke-width="2" /><line x1="1042.6" y1="268.8" x2="1046.6" y2="274.8" stroke="#00FF00" stroke-width="1.5" /><line x1="1013.6" y1="260.8" x2="1019.6" y2="264.8" stroke="#00FF00" stroke-width="2.5" /><line x1="1009.6" y1="268.8" x2="1015.6" y2="270.8" stroke="#00FF00" stroke-width="2.5" /><line x1="1021.6" y1="266.8" x2="1017.6" y2="271.8" stroke="#00FF00" stroke-width="1.5" /><polygon points="950.66,276.2 961.66,278.2 951.66,287.2" fill="#000" /><line x1="942.66" y1="274.2" x2="963.66" y2="279.2" stroke="#009800" stroke-width="3.5" /><line x1="962.66" y1="281.2" x2="951.66" y2="288.2" stroke="#00FF00" stroke-width="1.5" /><line x1="965.66" y1="276.2" x2="1015.66" y2="287.85" stroke="#009800" stroke-width="4" stroke-dasharray="16 3 22 9"/><line x1="975.66" y1="278.2" x2="1000.66" y2="284.025" stroke="#00FF00" stroke-width="2.5" /><line x1="981.66" y1="286.2" x2="1001.66" y2="289.2" stroke="#00FF00" stroke-width="2" /><line x1="969.66" y1="284.2" x2="975.66" y2="289.2" stroke="#00FF00" stroke-width="1.5" /><line x1="1027.66" y1="278.2" x2="1110.66" y2="297.539" stroke="#009800" stroke-width="4" stroke-dasharray="24 5 30 6 18"/><line x1="1037.66" y1="280.2" x2="1075.66" y2="289.054" stroke="#00FF00" stroke-width="2.5" /><line x1="1045.66" y1="287.2" x2="1067.66" y2="291.2" stroke="#00FF00" stroke-width="2" /><line x1="1083.66" y1="287.2" x2="1099.66" y2="291.2" stroke="#00FF00" stroke-width="2" /><line x1="1040.66" y1="285.2" x2="1044.66" y2="291.2" stroke="#00FF00" stroke-width="1.5" /><line x1="1011.66" y1="277.2" x2="1017.66" y2="281.2" stroke="#00FF00" stroke-width="2.5" /><line x1="1007.66" y1="285.2" x2="1013.66" y2="287.2" stroke="#00FF00" stroke-width="2.5" /><line x1="1019.66" y1="283.2" x2="1015.66" y2="288.2" stroke="#00FF00" stroke-width="1.5" /><polygon points="948.725,292.6 959.725,294.6 949.725,303.6" fill="#000" /><line x1="940.725" y1="290.6" x2="961.725" y2="295.6" stroke="#009800" stroke-width="3.5" /><line x1="960.725" y1="297.6" x2="949.725" y2="304.6" stroke="#00FF00" stroke-width="1.5" /><line x1="963.725" y1="292.6" x2="1013.73" y2="304.25" stroke="#009800" stroke-width="4" stroke-dasharray="16 3 22 9"/><line x1="973.725" y1="294.6" x2="998.725" y2="300.425" stroke="#00FF00" stroke-width="2.5" /><line x1="979.725" y1="302.6" x2="999.725" y2="305.6" stroke="#00FF00" stroke-width="2" /><line x1="967.725" y1="300.6" x2="973.725" y2="305.6" stroke="#00FF00" stroke-width="1.5" /><line x1="1025.73" y1="294.6" x2="1108.73" y2="313.939" stroke="#009800" stroke-width="4" stroke-dasharray="24 5 30 6 18"/><line x1="1035.73" y1="296.6" x2="1073.73" y2="305.454" stroke="#00FF00" stroke-width="2.5" /><line x1="1043.73" y1="303.6" x2="1065.73" y2="307.6" stroke="#00FF00" stroke-width="2" /><line x1="1081.73" y1="303.6" x2="1097.73" y2="307.6" stroke="#00FF00" stroke-width="2" /><line x1="1038.73" y1="301.6" x2="1042.73" y2="307.6" stroke="#00FF00" stroke-width="1.5" /><line x1="1009.73" y1="293.6" x2="1015.73" y2="297.6" stroke="#00FF00" stroke-width="2.5" /><line x1="1005.73" y1="301.6" x2="1011.73" y2="303.6" stroke="#00FF00" stroke-width="2.5" /><line x1="1017.73" y1="299.6" x2="1013.73" y2="304.6" stroke="#00FF00" stroke-width="1.5" /><polygon points="946.79,309 957.79,311 947.79,320" fill="#000" /><line x1="938.79" y1="307" x2="959.79" y2="312" stroke="#009800" stroke-width="3.5" /><line x1="958.79" y1="314" x2="947.79" y2="321" stroke="#00FF00" stroke-width="1.5" /><line x1="961.79" y1="309" x2="1011.79" y2="320.65" stroke="#009800" stroke-width="4" stroke-dasharray="16 3 22 9"/><line x1="971.79" y1="311" x2="996.79" y2="316.825" stroke="#00FF00" stroke-width="2.5" /><line x1="977.79" y1="319" x2="997.79" y2="322" stroke="#00FF00" stroke-width="2" /><line x1="965.79" y1="317" x2="971.79" y2="322" stroke="#00FF00" stroke-width="1.5" /><line x1="1023.79" y1="311" x2="1106.79" y2="330.339" stroke="#009800" stroke-width="4" stroke-dasharray="24 5 30 6 18"/><line x1="1033.79" y1="313" x2="1071.79" y2="321.854" stroke="#00FF00" stroke-width="2.5" /><line x1="1041.79" y1="320" x2="1063.79" y2="324" stroke="#00FF00" stroke-width="2" /><line x1="1079.79" y1="320" x2="1095.79" y2="324" stroke="#00FF00" stroke-width="2" /><line x1="1036.79" y1="318" x2="1040.79" y2="324" stroke="#00FF00" stroke-width="1.5" /><line x1="1007.79" y1="310" x2="1013.79" y2="314" stroke="#00FF00" stroke-width="2.5" /><line x1="1003.79" y1="318" x2="1009.79" y2="320" stroke="#00FF00" stroke-width="2.5" /><line x1="1015.79" y1="316" x2="1011.79" y2="321" stroke="#00FF00" stroke-width="1.5" /><polygon points="944.855,325.4 955.855,327.4 945.855,336.4" fill="#000" /><line x1="936.855" y1="323.4" x2="957.855" y2="328.4" stroke="#009800" stroke-width="3.5" /><line x1="956.855" y1="330.4" x2="945.855" y2="337.4" stroke="#00FF00" stroke-width="1.5" /><line x1="959.855" y1="325.4" x2="1009.85" y2="337.05" stroke="#009800" stroke-width="4" stroke-dasharray="16 3 22 9"/><line x1="969.855" y1="327.4" x2="994.855" y2="333.225" stroke="#00FF00" stroke-width="2.5" /><line x1="975.855" y1="335.4" x2="995.855" y2="338.4" stroke="#00FF00" stroke-width="2" /><line x1="963.855" y1="333.4" x2="969.855" y2="338.4" stroke="#00FF00" stroke-width="1.5" /><line x1="1021.85" y1="327.4" x2="1104.85" y2="346.739" stroke="#009800" stroke-width="4" stroke-dasharray="24 5 30 6 18"/><line x1="1031.85" y1="329.4" x2="1069.85" y2="338.254" stroke="#00FF00" stroke-width="2.5" /><line x1="1039.85" y1="336.4" x2="1061.85" y2="340.4" stroke="#00FF00" stroke-width="2" /><line x1="1077.85" y1="336.4" x2="1093.85" y2="340.4" stroke="#00FF00" stroke-width="2" /><line x1="1034.85" y1="334.4" x2="1038.85" y2="340.4" stroke="#00FF00" stroke-width="1.5" /><line x1="1005.85" y1="326.4" x2="1011.85" y2="330.4" stroke="#00FF00" stroke-width="2.5" /><line x1="1001.85" y1="334.4" x2="1007.85" y2="336.4" stroke="#00FF00" stroke-width="2.5" /><line x1="1013.85" y1="332.4" x2="1009.85" y2="337.4" stroke="#00FF00" stroke-width="1.5" /><polygon points="942.92,341.8 953.92,343.8 943.92,352.8" fill="#000" /><line x1="934.92" y1="339.8" x2="955.92" y2="344.8" stroke="#009800" stroke-width="3.5" /><line x1="954.92" y1="346.8" x2="943.92" y2="353.8" stroke="#00FF00" stroke-width="1.5" /><line x1="957.92" y1="341.8" x2="1007.92" y2="353.45" stroke="#009800" stroke-width="4" stroke-dasharray="16 3 22 9"/><line x1="967.92" y1="343.8" x2="992.92" y2="349.625" stroke="#00FF00" stroke-width="2.5" /><line x1="973.92" y1="351.8" x2="993.92" y2="354.8" stroke="#00FF00" stroke-width="2" /><line x1="961.92" y1="349.8" x2="967.92" y2="354.8" stroke="#00FF00" stroke-width="1.5" /><line x1="1019.92" y1="343.8" x2="1102.92" y2="363.139" stroke="#009800" stroke-width="4" stroke-dasharray="24 5 30 6 18"/><line x1="1029.92" y1="345.8" x2="1067.92" y2="354.654" stroke="#00FF00" stroke-width="2.5" /><line x1="1037.92" y1="352.8" x2="1059.92" y2="356.8" stroke="#00FF00" stroke-width="2" /><line x1="1075.92" y1="352.8" x2="1091.92" y2="356.8" stroke="#00FF00" stroke-width="2" /><line x1="1032.92" y1="350.8" x2="1036.92" y2="356.8" stroke="#00FF00" stroke-width="1.5" /><line x1="1003.92" y1="342.8" x2="1009.92" y2="346.8" stroke="#00FF00" stroke-width="2.5" /><line x1="999.92" y1="350.8" x2="1005.92" y2="352.8" stroke="#00FF00" stroke-width="2.5" /><line x1="1011.92" y1="348.8" x2="1007.92" y2="353.8" stroke="#00FF00" stroke-width="1.5" /><polygon points="940.984,358.2 951.984,360.2 941.984,369.2" fill="#000" /><line x1="932.984" y1="356.2" x2="953.984" y2="361.2" stroke="#009800" stroke-width="3.5" /><line x1="952.984" y1="363.2" x2="941.984" y2="370.2" stroke="#00FF00" stroke-width="1.5" /><line x1="955.984" y1="358.2" x2="1005.98" y2="369.85" stroke="#009800" stroke-width="4" stroke-dasharray="16 3 22 9"/><line x1="965.984" y1="360.2" x2="990.984" y2="366.025" stroke="#00FF00" stroke-width="2.5" /><line x1="971.984" y1="368.2" x2="991.984" y2="371.2" stroke="#00FF00" stroke-width="2" /><line x1="959.984" y1="366.2" x2="965.984" y2="371.2" stroke="#00FF00" stroke-width="1.5" /><line x1="1017.98" y1="360.2" x2="1100.98" y2="379.539" stroke="#009800" stroke-width="4" stroke-dasharray="24 5 30 6 18"/><line x1="1027.98" y1="362.2" x2="1065.98" y2="371.054" stroke="#00FF00" stroke-width="2.5" /><line x1="1035.98" y1="369.2" x2="1057.98" y2="373.2" stroke="#00FF00" stroke-width="2" /><line x1="1073.98" y1="369.2" x2="1089.98" y2="373.2" stroke="#00FF00" stroke-width="2" /><line x1="1030.98" y1="367.2" x2="1034.98" y2="373.2" stroke="#00FF00" stroke-width="1.5" /><line x1="1001.98" y1="359.2" x2="1007.98" y2="363.2" stroke="#00FF00" stroke-width="2.5" /><line x1="997.984" y1="367.2" x2="1003.98" y2="369.2" stroke="#00FF00" stroke-width="2.5" /><line x1="1009.98" y1="365.2" x2="1005.98" y2="370.2" stroke="#00FF00" stroke-width="1.5" /><polygon points="939.049,374.6 950.049,376.6 940.049,385.6" fill="#000" /><line x1="931.049" y1="372.6" x2="952.049" y2="377.6" stroke="#009800" stroke-width="3.5" /><line x1="951.049" y1="379.6" x2="940.049" y2="386.6" stroke="#00FF00" stroke-width="1.5" /><line x1="954.049" y1="374.6" x2="1004.05" y2="386.25" stroke="#009800" stroke-width="4" stroke-dasharray="16 3 22 9"/><line x1="964.049" y1="376.6" x2="989.049" y2="382.425" stroke="#00FF00" stroke-width="2.5" /><line x1="970.049" y1="384.6" x2="990.049" y2="387.6" stroke="#00FF00" stroke-width="2" /><line x1="958.049" y1="382.6" x2="964.049" y2="387.6" stroke="#00FF00" stroke-width="1.5" /><line x1="1016.05" y1="376.6" x2="1099.05" y2="395.939" stroke="#009800" stroke-width="4" stroke-dasharray="24 5 30 6 18"/><line x1="1026.05" y1="378.6" x2="1064.05" y2="387.454" stroke="#00FF00" stroke-width="2.5" /><line x1="1034.05" y1="385.6" x2="1056.05" y2="389.6" stroke="#00FF00" stroke-width="2" /><line x1="1072.05" y1="385.6" x2="1088.05" y2="389.6" stroke="#00FF00" stroke-width="2" /><line x1="1029.05" y1="383.6" x2="1033.05" y2="389.6" stroke="#00FF00" stroke-width="1.5" /><line x1="1000.05" y1="375.6" x2="1006.05" y2="379.6" stroke="#00FF00" stroke-width="2.5" /><line x1="996.049" y1="383.6" x2="1002.05" y2="385.6" stroke="#00FF00" stroke-width="2.5" /><line x1="1008.05" y1="381.6" x2="1004.05" y2="386.6" stroke="#00FF00" stroke-width="1.5" /><polygon points="937.114,391 948.114,393 938.114,402" fill="#000" /><line x1="929.114" y1="389" x2="950.114" y2="394" stroke="#009800" stroke-width="3.5" /><line x1="949.114" y1="396" x2="938.114" y2="403" stroke="#00FF00" stroke-width="1.5" /><line x1="952.114" y1="391" x2="1002.11" y2="402.65" stroke="#009800" stroke-width="4" stroke-dasharray="16 3 22 9"/><line x1="962.114" y1="393" x2="987.114" y2="398.825" stroke="#00FF00" stroke-width="2.5" /><line x1="968.114" y1="401" x2="988.114" y2="404" stroke="#00FF00" stroke-width="2" /><line x1="956.114" y1="399" x2="962.114" y2="404" stroke="#00FF00" stroke-width="1.5" /><line x1="1014.11" y1="393" x2="1097.11" y2="412.339" stroke="#009800" stroke-width="4" stroke-dasharray="24 5 30 6 18"/><line x1="1024.11" y1="395" x2="1062.11" y2="403.854" stroke="#00FF00" stroke-width="2.5" /><line x1="1032.11" y1="402" x2="1054.11" y2="406" stroke="#00FF00" stroke-width="2" /><line x1="1070.11" y1="402" x2="1086.11" y2="406" stroke="#00FF00" stroke-width="2" /><line x1="1027.11" y1="400" x2="1031.11" y2="406" stroke="#00FF00" stroke-width="1.5" /><line x1="998.114" y1="392" x2="1004.11" y2="396" stroke="#00FF00" stroke-width="2.5" /><line x1="994.114" y1="400" x2="1000.11" y2="402" stroke="#00FF00" stroke-width="2.5" /><line x1="1006.11" y1="398" x2="1002.11" y2="403" stroke="#00FF00" stroke-width="1.5" /><polygon points="935.179,407.4 946.179,409.4 936.179,418.4" fill="#000" /><line x1="927.179" y1="405.4" x2="948.179" y2="410.4" stroke="#009800" stroke-width="3.5" /><line x1="947.179" y1="412.4" x2="936.179" y2="419.4" stroke="#00FF00" stroke-width="1.5" /><line x1="950.179" y1="407.4" x2="1000.18" y2="419.05" stroke="#009800" stroke-width="4" stroke-dasharray="16 3 22 9"/><line x1="960.179" y1="409.4" x2="985.179" y2="415.225" stroke="#00FF00" stroke-width="2.5" /><line x1="966.179" y1="417.4" x2="986.179" y2="420.4" stroke="#00FF00" stroke-width="2" /><line x1="954.179" y1="415.4" x2="960.179" y2="420.4" stroke="#00FF00" stroke-width="1.5" /><line x1="1012.18" y1="409.4" x2="1095.18" y2="428.739" stroke="#009800" stroke-width="4" stroke-dasharray="24 5 30 6 18"/><line x1="1022.18" y1="411.4" x2="1060.18" y2="420.254" stroke="#00FF00" stroke-width="2.5" /><line x1="1030.18" y1="418.4" x2="1052.18" y2="422.4" stroke="#00FF00" stroke-width="2" /><line x1="1068.18" y1="418.4" x2="1084.18" y2="422.4" stroke="#00FF00" stroke-width="2" /><line x1="1025.18" y1="416.4" x2="1029.18" y2="422.4" stroke="#00FF00" stroke-width="1.5" /><line x1="996.179" y1="408.4" x2="1002.18" y2="412.4" stroke="#00FF00" stroke-width="2.5" /><line x1="992.179" y1="416.4" x2="998.179" y2="418.4" stroke="#00FF00" stroke-width="2.5" /><line x1="1004.18" y1="414.4" x2="1000.18" y2="419.4" stroke="#00FF00" stroke-width="1.5" /><polygon points="933.244,423.8 944.244,425.8 934.244,434.8" fill="#000" /><line x1="925.244" y1="421.8" x2="946.244" y2="426.8" stroke="#009800" stroke-width="3.5" /><line x1="945.244" y1="428.8" x2="934.244" y2="435.8" stroke="#00FF00" stroke-width="1.5" /><line x1="948.244" y1="423.8" x2="998.244" y2="435.45" stroke="#009800" stroke-width="4" stroke-dasharray="16 3 22 9"/><line x1="958.244" y1="425.8" x2="983.244" y2="431.625" stroke="#00FF00" stroke-width="2.5" /><line x1="964.244" y1="433.8" x2="984.244" y2="436.8" stroke="#00FF00" stroke-width="2" /><line x1="952.244" y1="431.8" x2="958.244" y2="436.8" stroke="#00FF00" stroke-width="1.5" /><line x1="1010.24" y1="425.8" x2="1093.24" y2="445.139" stroke="#009800" stroke-width="4" stroke-dasharray="24 5 30 6 18"/><line x1="1020.24" y1="427.8" x2="1058.24" y2="436.654" stroke="#00FF00" stroke-width="2.5" /><line x1="1028.24" y1="434.8" x2="1050.24" y2="438.8" stroke="#00FF00" stroke-width="2" /><line x1="1066.24" y1="434.8" x2="1082.24" y2="438.8" stroke="#00FF00" stroke-width="2" /><line x1="1023.24" y1="432.8" x2="1027.24" y2="438.8" stroke="#00FF00" stroke-width="1.5" /><line x1="994.244" y1="424.8" x2="1000.24" y2="428.8" stroke="#00FF00" stroke-width="2.5" /><line x1="990.244" y1="432.8" x2="996.244" y2="434.8" stroke="#00FF00" stroke-width="2.5" /><line x1="1002.24" y1="430.8" x2="998.244" y2="435.8" stroke="#00FF00" stroke-width="1.5" /><polygon points="931.308,440.2 942.308,442.2 932.308,451.2" fill="#000" /><line x1="923.308" y1="438.2" x2="944.308" y2="443.2" stroke="#009800" stroke-width="3.5" /><line x1="943.308" y1="445.2" x2="932.308" y2="452.2" stroke="#00FF00" stroke-width="1.5" /><line x1="946.308" y1="440.2" x2="996.308" y2="451.85" stroke="#009800" stroke-width="4" stroke-dasharray="16 3 22 9"/><line x1="956.308" y1="442.2" x2="981.308" y2="448.025" stroke="#00FF00" stroke-width="2.5" /><line x1="962.308" y1="450.2" x2="982.308" y2="453.2" stroke="#00FF00" stroke-width="2" /><line x1="950.308" y1="448.2" x2="956.308" y2="453.2" stroke="#00FF00" stroke-width="1.5" /><line x1="1008.31" y1="442.2" x2="1091.31" y2="461.539" stroke="#009800" stroke-width="4" stroke-dasharray="24 5 30 6 18"/><line x1="1018.31" y1="444.2" x2="1056.31" y2="453.054" stroke="#00FF00" stroke-width="2.5" /><line x1="1026.31" y1="451.2" x2="1048.31" y2="455.2" stroke="#00FF00" stroke-width="2" /><line x1="1064.31" y1="451.2" x2="1080.31" y2="455.2" stroke="#00FF00" stroke-width="2" /><line x1="1021.31" y1="449.2" x2="1025.31" y2="455.2" stroke="#00FF00" stroke-width="1.5" /><line x1="992.308" y1="441.2" x2="998.308" y2="445.2" stroke="#00FF00" stroke-width="2.5" /><line x1="988.308" y1="449.2" x2="994.308" y2="451.2" stroke="#00FF00" stroke-width="2.5" /><line x1="1000.31" y1="447.2" x2="996.308" y2="452.2" stroke="#00FF00" stroke-width="1.5" /><polygon points="929.373,456.6 940.373,458.6 930.373,467.6" fill="#000" /><line x1="921.373" y1="454.6" x2="942.373" y2="459.6" stroke="#009800" stroke-width="3.5" /><line x1="941.373" y1="461.6" x2="930.373" y2="468.6" stroke="#00FF00" stroke-width="1.5" /><line x1="944.373" y1="456.6" x2="994.373" y2="468.25" stroke="#009800" stroke-width="4" stroke-dasharray="16 3 22 9"/><line x1="954.373" y1="458.6" x2="979.373" y2="464.425" stroke="#00FF00" stroke-width="2.5" /><line x1="960.373" y1="466.6" x2="980.373" y2="469.6" stroke="#00FF00" stroke-width="2" /><line x1="948.373" y1="464.6" x2="954.373" y2="469.6" stroke="#00FF00" stroke-width="1.5" /><line x1="1006.37" y1="458.6" x2="1089.37" y2="477.939" stroke="#009800" stroke-width="4" stroke-dasharray="24 5 30 6 18"/><line x1="1016.37" y1="460.6" x2="1054.37" y2="469.454" stroke="#00FF00" stroke-width="2.5" /><line x1="1024.37" y1="467.6" x2="1046.37" y2="471.6" stroke="#00FF00" stroke-width="2" /><line x1="1062.37" y1="467.6" x2="1078.37" y2="471.6" stroke="#00FF00" stroke-width="2" /><line x1="1019.37" y1="465.6" x2="1023.37" y2="471.6" stroke="#00FF00" stroke-width="1.5" /><line x1="990.373" y1="457.6" x2="996.373" y2="461.6" stroke="#00FF00" stroke-width="2.5" /><line x1="986.373" y1="465.6" x2="992.373" y2="467.6" stroke="#00FF00" stroke-width="2.5" /><line x1="998.373" y1="463.6" x2="994.373" y2="468.6" stroke="#00FF00" stroke-width="1.5" /><polygon points="927.438,473 938.438,475 928.438,484" fill="#000" /><line x1="919.438" y1="471" x2="940.438" y2="476" stroke="#009800" stroke-width="3.5" /><line x1="939.438" y1="478" x2="928.438" y2="485" stroke="#00FF00" stroke-width="1.5" /><line x1="942.438" y1="473" x2="992.438" y2="484.65" stroke="#009800" stroke-width="4" stroke-dasharray="16 3 22 9"/><line x1="952.438" y1="475" x2="977.438" y2="480.825" stroke="#00FF00" stroke-width="2.5" /><line x1="958.438" y1="483" x2="978.438" y2="486" stroke="#00FF00" stroke-width="2" /><line x1="946.438" y1="481" x2="952.438" y2="486" stroke="#00FF00" stroke-width="1.5" /><line x1="1004.44" y1="475" x2="1087.44" y2="494.339" stroke="#009800" stroke-width="4" stroke-dasharray="24 5 30 6 18"/><line x1="1014.44" y1="477" x2="1052.44" y2="485.854" stroke="#00FF00" stroke-width="2.5" /><line x1="1022.44" y1="484" x2="1044.44" y2="488" stroke="#00FF00" stroke-width="2" /><line x1="1060.44" y1="484" x2="1076.44" y2="488" stroke="#00FF00" stroke-width="2" /><line x1="1017.44" y1="482" x2="1021.44" y2="488" stroke="#00FF00" stroke-width="1.5" /><line x1="988.438" y1="474" x2="994.438" y2="478" stroke="#00FF00" stroke-width="2.5" /><line x1="984.438" y1="482" x2="990.438" y2="484" stroke="#00FF00" stroke-width="2.5" /><line x1="996.438" y1="480" x2="992.438" y2="485" stroke="#00FF00" stroke-width="1.5" /><polygon points="925.503,489.4 936.503,491.4 926.503,500.4" fill="#000" /><line x1="917.503" y1="487.4" x2="938.503" y2="492.4" stroke="#009800" stroke-width="3.5" /><line x1="937.503" y1="494.4" x2="926.503" y2="501.4" stroke="#00FF00" stroke-width="1.5" /><line x1="940.503" y1="489.4" x2="990.503" y2="501.05" stroke="#009800" stroke-width="4" stroke-dasharray="16 3 22 9"/><line x1="950.503" y1="491.4" x2="975.503" y2="497.225" stroke="#00FF00" stroke-width="2.5" /><line x1="956.503" y1="499.4" x2="976.503" y2="502.4" stroke="#00FF00" stroke-width="2" /><line x1="944.503" y1="497.4" x2="950.503" y2="502.4" stroke="#00FF00" stroke-width="1.5" /><line x1="1002.5" y1="491.4" x2="1085.5" y2="510.739" stroke="#009800" stroke-width="4" stroke-dasharray="24 5 30 6 18"/><line x1="1012.5" y1="493.4" x2="1050.5" y2="502.254" stroke="#00FF00" stroke-width="2.5" /><line x1="1020.5" y1="500.4" x2="1042.5" y2="504.4" stroke="#00FF00" stroke-width="2" /><line x1="1058.5" y1="500.4" x2="1074.5" y2="504.4" stroke="#00FF00" stroke-width="2" /><line x1="1015.5" y1="498.4" x2="1019.5" y2="504.4" stroke="#00FF00" stroke-width="1.5" /><line x1="986.503" y1="490.4" x2="992.503" y2="494.4" stroke="#00FF00" stroke-width="2.5" /><line x1="982.503" y1="498.4" x2="988.503" y2="500.4" stroke="#00FF00" stroke-width="2.5" /><line x1="994.503" y1="496.4" x2="990.503" y2="501.4" stroke="#00FF00" stroke-width="1.5" /><polygon points="923.568,505.8 934.568,507.8 924.568,516.8" fill="#000" /><line x1="915.568" y1="503.8" x2="936.568" y2="508.8" stroke="#009800" stroke-width="3.5" /><line x1="935.568" y1="510.8" x2="924.568" y2="517.8" stroke="#00FF00" stroke-width="1.5" /><line x1="938.568" y1="505.8" x2="988.568" y2="517.45" stroke="#009800" stroke-width="4" stroke-dasharray="16 3 22 9"/><line x1="948.568" y1="507.8" x2="973.568" y2="513.625" stroke="#00FF00" stroke-width="2.5" /><line x1="954.568" y1="515.8" x2="974.568" y2="518.8" stroke="#00FF00" stroke-width="2" /><line x1="942.568" y1="513.8" x2="948.568" y2="518.8" stroke="#00FF00" stroke-width="1.5" /><line x1="1000.57" y1="507.8" x2="1083.57" y2="527.139" stroke="#009800" stroke-width="4" stroke-dasharray="24 5 30 6 18"/><line x1="1010.57" y1="509.8" x2="1048.57" y2="518.654" stroke="#00FF00" stroke-width="2.5" /><line x1="1018.57" y1="516.8" x2="1040.57" y2="520.8" stroke="#00FF00" stroke-width="2" /><line x1="1056.57" y1="516.8" x2="1072.57" y2="520.8" stroke="#00FF00" stroke-width="2" /><line x1="1013.57" y1="514.8" x2="1017.57" y2="520.8" stroke="#00FF00" stroke-width="1.5" /><line x1="984.568" y1="506.8" x2="990.568" y2="510.8" stroke="#00FF00" stroke-width="2.5" /><line x1="980.568" y1="514.8" x2="986.568" y2="516.8" stroke="#00FF00" stroke-width="2.5" /><line x1="992.568" y1="512.8" x2="988.568" y2="517.8" stroke="#00FF00" stroke-width="1.5" /><polygon points="921.632,522.2 932.632,524.2 922.632,533.2" fill="#000" /><line x1="913.632" y1="520.2" x2="934.632" y2="525.2" stroke="#009800" stroke-width="3.5" /><line x1="933.632" y1="527.2" x2="922.632" y2="534.2" stroke="#00FF00" stroke-width="1.5" /><line x1="936.632" y1="522.2" x2="986.632" y2="533.85" stroke="#009800" stroke-width="4" stroke-dasharray="16 3 22 9"/><line x1="946.632" y1="524.2" x2="971.632" y2="530.025" stroke="#00FF00" stroke-width="2.5" /><line x1="952.632" y1="532.2" x2="972.632" y2="535.2" stroke="#00FF00" stroke-width="2" /><line x1="940.632" y1="530.2" x2="946.632" y2="535.2" stroke="#00FF00" stroke-width="1.5" /><line x1="998.632" y1="524.2" x2="1081.63" y2="543.539" stroke="#009800" stroke-width="4" stroke-dasharray="24 5 30 6 18"/><line x1="1008.63" y1="526.2" x2="1046.63" y2="535.054" stroke="#00FF00" stroke-width="2.5" /><line x1="1016.63" y1="533.2" x2="1038.63" y2="537.2" stroke="#00FF00" stroke-width="2" /><line x1="1054.63" y1="533.2" x2="1070.63" y2="537.2" stroke="#00FF00" stroke-width="2" /><line x1="1011.63" y1="531.2" x2="1015.63" y2="537.2" stroke="#00FF00" stroke-width="1.5" /><line x1="982.632" y1="523.2" x2="988.632" y2="527.2" stroke="#00FF00" stroke-width="2.5" /><line x1="978.632" y1="531.2" x2="984.632" y2="533.2" stroke="#00FF00" stroke-width="2.5" /><line x1="990.632" y1="529.2" x2="986.632" y2="534.2" stroke="#00FF00" stroke-width="1.5" /><polygon points="919.697,538.6 930.697,540.6 920.697,549.6" fill="#000" /><line x1="911.697" y1="536.6" x2="932.697" y2="541.6" stroke="#009800" stroke-width="3.5" /><line x1="931.697" y1="543.6" x2="920.697" y2="550.6" stroke="#00FF00" stroke-width="1.5" /><line x1="934.697" y1="538.6" x2="984.697" y2="550.25" stroke="#009800" stroke-width="4" stroke-dasharray="16 3 22 9"/><line x1="944.697" y1="540.6" x2="969.697" y2="546.425" stroke="#00FF00" stroke-width="2.5" /><line x1="950.697" y1="548.6" x2="970.697" y2="551.6" stroke="#00FF00" stroke-width="2" /><line x1="938.697" y1="546.6" x2="944.697" y2="551.6" stroke="#00FF00" stroke-width="1.5" /><line x1="996.697" y1="540.6" x2="1079.7" y2="559.939" stroke="#009800" stroke-width="4" stroke-dasharray="24 5 30 6 18"/><line x1="1006.7" y1="542.6" x2="1044.7" y2="551.454" stroke="#00FF00" stroke-width="2.5" /><line x1="1014.7" y1="549.6" x2="1036.7" y2="553.6" stroke="#00FF00" stroke-width="2" /><line x1="1052.7" y1="549.6" x2="1068.7" y2="553.6" stroke="#00FF00" stroke-width="2" /><line x1="1009.7" y1="547.6" x2="1013.7" y2="553.6" stroke="#00FF00" stroke-width="1.5" /><line x1="980.697" y1="539.6" x2="986.697" y2="543.6" stroke="#00FF00" stroke-width="2.5" /><line x1="976.697" y1="547.6" x2="982.697" y2="549.6" stroke="#00FF00" stroke-width="2.5" /><line x1="988.697" y1="545.6" x2="984.697" y2="550.6" stroke="#00FF00" stroke-width="1.5" /><polygon points="917.762,555 928.762,557 918.762,566" fill="#000" /><line x1="909.762" y1="553" x2="930.762" y2="558" stroke="#009800" stroke-width="3.5" /><line x1="929.762" y1="560" x2="918.762" y2="567" stroke="#00FF00" stroke-width="1.5" /><line x1="932.762" y1="555" x2="982.762" y2="566.65" stroke="#009800" stroke-width="4" stroke-dasharray="16 3 22 9"/><line x1="942.762" y1="557" x2="967.762" y2="562.825" stroke="#00FF00" stroke-width="2.5" /><line x1="948.762" y1="565" x2="968.762" y2="568" stroke="#00FF00" stroke-width="2" /><line x1="936.762" y1="563" x2="942.762" y2="568" stroke="#00FF00" stroke-width="1.5" /><line x1="994.762" y1="557" x2="1077.76" y2="576.339" stroke="#009800" stroke-width="4" stroke-dasharray="24 5 30 6 18"/><line x1="1004.76" y1="559" x2="1042.76" y2="567.854" stroke="#00FF00" stroke-width="2.5" /><line x1="1012.76" y1="566" x2="1034.76" y2="570" stroke="#00FF00" stroke-width="2" /><line x1="1050.76" y1="566" x2="1066.76" y2="570" stroke="#00FF00" stroke-width="2" /><line x1="1007.76" y1="564" x2="1011.76" y2="570" stroke="#00FF00" stroke-width="1.5" /><line x1="978.762" y1="556" x2="984.762" y2="560" stroke="#00FF00" stroke-width="2.5" /><line x1="974.762" y1="564" x2="980.762" y2="566" stroke="#00FF00" stroke-width="2.5" /><line x1="986.762" y1="562" x2="982.762" y2="567" stroke="#00FF00" stroke-width="1.5" /><polygon points="915.827,571.4 926.827,573.4 916.827,582.4" fill="#000" /><line x1="907.827" y1="569.4" x2="928.827" y2="574.4" stroke="#009800" stroke-width="3.5" /><line x1="927.827" y1="576.4" x2="916.827" y2="583.4" stroke="#00FF00" stroke-width="1.5" /><line x1="930.827" y1="571.4" x2="980.827" y2="583.05" stroke="#009800" stroke-width="4" stroke-dasharray="16 3 22 9"/><line x1="940.827" y1="573.4" x2="965.827" y2="579.225" stroke="#00FF00" stroke-width="2.5" /><line x1="946.827" y1="581.4" x2="966.827" y2="584.4" stroke="#00FF00" stroke-width="2" /><line x1="934.827" y1="579.4" x2="940.827" y2="584.4" stroke="#00FF00" stroke-width="1.5" /><line x1="992.827" y1="573.4" x2="1075.83" y2="592.739" stroke="#009800" stroke-width="4" stroke-dasharray="24 5 30 6 18"/><line x1="1002.83" y1="575.4" x2="1040.83" y2="584.254" stroke="#00FF00" stroke-width="2.5" /><line x1="1010.83" y1="582.4" x2="1032.83" y2="586.4" stroke="#00FF00" stroke-width="2" /><line x1="1048.83" y1="582.4" x2="1064.83" y2="586.4" stroke="#00FF00" stroke-width="2" /><line x1="1005.83" y1="580.4" x2="1009.83" y2="586.4" stroke="#00FF00" stroke-width="1.5" /><line x1="976.827" y1="572.4" x2="982.827" y2="576.4" stroke="#00FF00" stroke-width="2.5" /><line x1="972.827" y1="580.4" x2="978.827" y2="582.4" stroke="#00FF00" stroke-width="2.5" /><line x1="984.827" y1="578.4" x2="980.827" y2="583.4" stroke="#00FF00" stroke-width="1.5" /><polygon points="913.892,587.8 924.892,589.8 914.892,598.8" fill="#000" /><line x1="905.892" y1="585.8" x2="926.892" y2="590.8" stroke="#009800" stroke-width="3.5" /><line x1="925.892" y1="592.8" x2="914.892" y2="599.8" stroke="#00FF00" stroke-width="1.5" /><line x1="928.892" y1="587.8" x2="978.892" y2="599.45" stroke="#009800" stroke-width="4" stroke-dasharray="16 3 22 9"/><line x1="938.892" y1="589.8" x2="963.892" y2="595.625" stroke="#00FF00" stroke-width="2.5" /><line x1="944.892" y1="597.8" x2="964.892" y2="600.8" stroke="#00FF00" stroke-width="2" /><line x1="932.892" y1="595.8" x2="938.892" y2="600.8" stroke="#00FF00" stroke-width="1.5" /><line x1="990.892" y1="589.8" x2="1073.89" y2="609.139" stroke="#009800" stroke-width="4" stroke-dasharray="24 5 30 6 18"/><line x1="1000.89" y1="591.8" x2="1038.89" y2="600.654" stroke="#00FF00" stroke-width="2.5" /><line x1="1008.89" y1="598.8" x2="1030.89" y2="602.8" stroke="#00FF00" stroke-width="2" /><line x1="1046.89" y1="598.8" x2="1062.89" y2="602.8" stroke="#00FF00" stroke-width="2" /><line x1="1003.89" y1="596.8" x2="1007.89" y2="602.8" stroke="#00FF00" stroke-width="1.5" /><line x1="974.892" y1="588.8" x2="980.892" y2="592.8" stroke="#00FF00" stroke-width="2.5" /><line x1="970.892" y1="596.8" x2="976.892" y2="598.8" stroke="#00FF00" stroke-width="2.5" /><line x1="982.892" y1="594.8" x2="978.892" y2="599.8" stroke="#00FF00" stroke-width="1.5" /><polygon points="911.956,604.2 922.956,606.2 912.956,615.2" fill="#000" /><line x1="903.956" y1="602.2" x2="924.956" y2="607.2" stroke="#009800" stroke-width="3.5" /><line x1="923.956" y1="609.2" x2="912.956" y2="616.2" stroke="#00FF00" stroke-width="1.5" /><line x1="926.956" y1="604.2" x2="976.956" y2="615.85" stroke="#009800" stroke-width="4" stroke-dasharray="16 3 22 9"/><line x1="936.956" y1="606.2" x2="961.956" y2="612.025" stroke="#00FF00" stroke-width="2.5" /><line x1="942.956" y1="614.2" x2="962.956" y2="617.2" stroke="#00FF00" stroke-width="2" /><line x1="930.956" y1="612.2" x2="936.956" y2="617.2" stroke="#00FF00" stroke-width="1.5" /><line x1="988.956" y1="606.2" x2="1071.96" y2="625.539" stroke="#009800" stroke-width="4" stroke-dasharray="24 5 30 6 18"/><line x1="998.956" y1="608.2" x2="1036.96" y2="617.054" stroke="#00FF00" stroke-width="2.5" /><line x1="1006.96" y1="615.2" x2="1028.96" y2="619.2" stroke="#00FF00" stroke-width="2" /><line x1="1044.96" y1="615.2" x2="1060.96" y2="619.2" stroke="#00FF00" stroke-width="2" /><line x1="1001.96" y1="613.2" x2="1005.96" y2="619.2" stroke="#00FF00" stroke-width="1.5" /><line x1="972.956" y1="605.2" x2="978.956" y2="609.2" stroke="#00FF00" stroke-width="2.5" /><line x1="968.956" y1="613.2" x2="974.956" y2="615.2" stroke="#00FF00" stroke-width="2.5" /><line x1="980.956" y1="611.2" x2="976.956" y2="616.2" stroke="#00FF00" stroke-width="1.5" /><polygon points="910.021,620.6 921.021,622.6 911.021,631.6" fill="#000" /><line x1="902.021" y1="618.6" x2="923.021" y2="623.6" stroke="#009800" stroke-width="3.5" /><line x1="922.021" y1="625.6" x2="911.021" y2="632.6" stroke="#00FF00" stroke-width="1.5" /><line x1="925.021" y1="620.6" x2="975.021" y2="632.25" stroke="#009800" stroke-width="4" stroke-dasharray="16 3 22 9"/><line x1="935.021" y1="622.6" x2="960.021" y2="628.425" stroke="#00FF00" stroke-width="2.5" /><line x1="941.021" y1="630.6" x2="961.021" y2="633.6" stroke="#00FF00" stroke-width="2" /><line x1="929.021" y1="628.6" x2="935.021" y2="633.6" stroke="#00FF00" stroke-width="1.5" /><line x1="987.021" y1="622.6" x2="1070.02" y2="641.939" stroke="#009800" stroke-width="4" stroke-dasharray="24 5 30 6 18"/><line x1="997.021" y1="624.6" x2="1035.02" y2="633.454" stroke="#00FF00" stroke-width="2.5" /><line x1="1005.02" y1="631.6" x2="1027.02" y2="635.6" stroke="#00FF00" stroke-width="2" /><line x1="1043.02" y1="631.6" x2="1059.02" y2="635.6" stroke="#00FF00" stroke-width="2" /><line x1="1000.02" y1="629.6" x2="1004.02" y2="635.6" stroke="#00FF00" stroke-width="1.5" /><line x1="971.021" y1="621.6" x2="977.021" y2="625.6" stroke="#00FF00" stroke-width="2.5" /><line x1="967.021" y1="629.6" x2="973.021" y2="631.6" stroke="#00FF00" stroke-width="2.5" /><line x1="979.021" y1="627.6" x2="975.021" y2="632.6" stroke="#00FF00" stroke-width="1.5" /><polygon points="908.086,637 919.086,639 909.086,648" fill="#000" /><line x1="900.086" y1="635" x2="921.086" y2="640" stroke="#009800" stroke-width="3.5" /><line x1="920.086" y1="642" x2="909.086" y2="649" stroke="#00FF00" stroke-width="1.5" /><line x1="923.086" y1="637" x2="973.086" y2="648.65" stroke="#009800" stroke-width="4" stroke-dasharray="16 3 22 9"/><line x1="933.086" y1="639" x2="958.086" y2="644.825" stroke="#00FF00" stroke-width="2.5" /><line x1="939.086" y1="647" x2="959.086" y2="650" stroke="#00FF00" stroke-width="2" /><line x1="927.086" y1="645" x2="933.086" y2="650" stroke="#00FF00" stroke-width="1.5" /><line x1="985.086" y1="639" x2="1068.09" y2="658.339" stroke="#009800" stroke-width="4" stroke-dasharray="24 5 30 6 18"/><line x1="995.086" y1="641" x2="1033.09" y2="649.854" stroke="#00FF00" stroke-width="2.5" /><line x1="1003.09" y1="648" x2="1025.09" y2="652" stroke="#00FF00" stroke-width="2" /><line x1="1041.09" y1="648" x2="1057.09" y2="652" stroke="#00FF00" stroke-width="2" /><line x1="998.086" y1="646" x2="1002.09" y2="652" stroke="#00FF00" stroke-width="1.5" /><line x1="969.086" y1="638" x2="975.086" y2="642" stroke="#00FF00" stroke-width="2.5" /><line x1="965.086" y1="646" x2="971.086" y2="648" stroke="#00FF00" stroke-width="2.5" /><line x1="977.086" y1="644" x2="973.086" y2="649" stroke="#00FF00" stroke-width="1.5" /><polygon points="906.151,653.4 917.151,655.4 907.151,664.4" fill="#000" /><line x1="898.151" y1="651.4" x2="919.151" y2="656.4" stroke="#009800" stroke-width="3.5" /><line x1="918.151" y1="658.4" x2="907.151" y2="665.4" stroke="#00FF00" stroke-width="1.5" /><line x1="921.151" y1="653.4" x2="971.151" y2="665.05" stroke="#009800" stroke-width="4" stroke-dasharray="16 3 22 9"/><line x1="931.151" y1="655.4" x2="956.151" y2="661.225" stroke="#00FF00" stroke-width="2.5" /><line x1="937.151" y1="663.4" x2="957.151" y2="666.4" stroke="#00FF00" stroke-width="2" /><line x1="925.151" y1="661.4" x2="931.151" y2="666.4" stroke="#00FF00" stroke-width="1.5" /><line x1="983.151" y1="655.4" x2="1066.15" y2="674.739" stroke="#009800" stroke-width="4" stroke-dasharray="24 5 30 6 18"/><line x1="993.151" y1="657.4" x2="1031.15" y2="666.254" stroke="#00FF00" stroke-width="2.5" /><line x1="1001.15" y1="664.4" x2="1023.15" y2="668.4" stroke="#00FF00" stroke-width="2" /><line x1="1039.15" y1="664.4" x2="1055.15" y2="668.4" stroke="#00FF00" stroke-width="2" /><line x1="996.151" y1="662.4" x2="1000.15" y2="668.4" stroke="#00FF00" stroke-width="1.5" /><line x1="967.151" y1="654.4" x2="973.151" y2="658.4" stroke="#00FF00" stroke-width="2.5" /><line x1="963.151" y1="662.4" x2="969.151" y2="664.4" stroke="#00FF00" stroke-width="2.5" /><line x1="975.151" y1="660.4" x2="971.151" y2="665.4" stroke="#00FF00" stroke-width="1.5" /><polygon points="904.216,669.8 915.216,671.8 905.216,680.8" fill="#000" /><line x1="896.216" y1="667.8" x2="917.216" y2="672.8" stroke="#009800" stroke-width="3.5" /><line x1="916.216" y1="674.8" x2="905.216" y2="681.8" stroke="#00FF00" stroke-width="1.5" /><line x1="919.216" y1="669.8" x2="969.216" y2="681.45" stroke="#009800" stroke-width="4" stroke-dasharray="16 3 22 9"/><line x1="929.216" y1="671.8" x2="954.216" y2="677.625" stroke="#00FF00" stroke-width="2.5" /><line x1="935.216" y1="679.8" x2="955.216" y2="682.8" stroke="#00FF00" stroke-width="2" /><line x1="923.216" y1="677.8" x2="929.216" y2="682.8" stroke="#00FF00" stroke-width="1.5" /><line x1="981.216" y1="671.8" x2="1064.22" y2="691.139" stroke="#009800" stroke-width="4" stroke-dasharray="24 5 30 6 18"/><line x1="991.216" y1="673.8" x2="1029.22" y2="682.654" stroke="#00FF00" stroke-width="2.5" /><line x1="999.216" y1="680.8" x2="1021.22" y2="684.8" stroke="#00FF00" stroke-width="2" /><line x1="1037.22" y1="680.8" x2="1053.22" y2="684.8" stroke="#00FF00" stroke-width="2" /><line x1="994.216" y1="678.8" x2="998.216" y2="684.8" stroke="#00FF00" stroke-width="1.5" /><line x1="965.216" y1="670.8" x2="971.216" y2="674.8" stroke="#00FF00" stroke-width="2.5" /><line x1="961.216" y1="678.8" x2="967.216" y2="680.8" stroke="#00FF00" stroke-width="2.5" /><line x1="973.216" y1="676.8" x2="969.216" y2="681.8" stroke="#00FF00" stroke-width="1.5" /></g><polygon points="954,190 962,183 1029,180 1044,170 1127,191 1127,201 1100,250 1036,234 1019,229 954,212" fill="#8C8C8C" /><polygon points="975,196 1010,205 1005,212 970,203" fill="#A4A4A4" /><line x1="960" y1="200" x2="1040" y2="221" stroke="#00FF00" stroke-width="1.5" /><line x1="1040" y1="213" x2="1098" y2="228" stroke="#00FF00" stroke-width="1.5" /><polygon points="1065,222 1095,230 1092,238 1062,230" fill="#A4A4A4" /><polygon points="954,205 1019,222 1019,229 954,212" fill="#A8A8F4" /><polygon points="1036,227 1100,243 1100,251 1036,234" fill="#A8A8F4" /><polygon points="1019,205 1037,210 1037,232 1019,228" fill="#9E9E9E" /><polygon points="1100,243 1127,192 1127,200 1100,251" fill="#6868A8" /><line x1="954" y1="213" x2="1100" y2="252" stroke="#00FF00" stroke-width="2" /><polygon points="1044,170 1127,191 1124,200 1040,178" fill="#A8A8F4" /><polygon points="1036,178 1085,190 1080,205 1032,192" fill="#9A9A9A" /><polygon points="1029,181 1040,178 1036,193 1026,190" fill="#6868A8" /><polygon points="962,183 979,165 1029,180 1022,188 1059,199 1059,209" fill="#00FF00" /><line x1="975" y1="169" x2="964" y2="183" stroke="#007000" stroke-width="1.1" /><line x1="979" y1="170.2" x2="968" y2="184.2" stroke="#007000" stroke-width="1.1" /><line x1="983" y1="171.4" x2="972" y2="185.4" stroke="#007000" stroke-width="1.1" /><line x1="987" y1="172.6" x2="976" y2="186.6" stroke="#007000" stroke-width="1.1" /><line x1="991" y1="173.8" x2="980" y2="187.8" stroke="#007000" stroke-width="1.1" /><line x1="995" y1="175" x2="984" y2="189" stroke="#007000" stroke-width="1.1" /><line x1="999" y1="176.2" x2="988" y2="190.2" stroke="#007000" stroke-width="1.1" /><line x1="1003" y1="177.4" x2="992" y2="191.4" stroke="#007000" stroke-width="1.1" /><line x1="1007" y1="178.6" x2="996" y2="192.6" stroke="#007000" stroke-width="1.1" /><line x1="1011" y1="179.8" x2="1000" y2="193.8" stroke="#007000" stroke-width="1.1" /><line x1="1015" y1="181" x2="1004" y2="195" stroke="#007000" stroke-width="1.1" /><line x1="1019" y1="182.2" x2="1008" y2="196.2" stroke="#007000" stroke-width="1.1" /><line x1="1023" y1="183.4" x2="1012" y2="197.4" stroke="#007000" stroke-width="1.1" /><line x1="1027" y1="184.6" x2="1016" y2="198.6" stroke="#007000" stroke-width="1.1" /><line x1="1030" y1="190" x2="1024" y2="200" stroke="#8CCF8C" stroke-width="1.5" /><line x1="1035" y1="191.5" x2="1029" y2="201.5" stroke="#8CCF8C" stroke-width="1.5" /><line x1="1040" y1="193" x2="1034" y2="203" stroke="#8CCF8C" stroke-width="1.5" /><line x1="1045" y1="194.5" x2="1039" y2="204.5" stroke="#8CCF8C" stroke-width="1.5" /><line x1="1050" y1="196" x2="1044" y2="206" stroke="#8CCF8C" stroke-width="1.5" /><line x1="1055" y1="197.5" x2="1049" y2="207.5" stroke="#8CCF8C" stroke-width="1.5" /><line x1="962" y1="184" x2="1059" y2="208" stroke="#00FF00" stroke-width="3" /><polygon points="1069,158 1110,169 1105,180 1058,166" fill="#00FF00" /><line x1="1068" y1="160" x2="1061" y2="168" stroke="#007000" stroke-width="1.1" /><line x1="1072.5" y1="161.2" x2="1065.5" y2="169.2" stroke="#007000" stroke-width="1.1" /><line x1="1077" y1="162.4" x2="1070" y2="170.4" stroke="#007000" stroke-width="1.1" /><line x1="1081.5" y1="163.6" x2="1074.5" y2="171.6" stroke="#007000" stroke-width="1.1" /><line x1="1086" y1="164.8" x2="1079" y2="172.8" stroke="#007000" stroke-width="1.1" /><line x1="1090.5" y1="166" x2="1083.5" y2="174" stroke="#007000" stroke-width="1.1" /><line x1="1095" y1="167.2" x2="1088" y2="175.2" stroke="#007000" stroke-width="1.1" /><line x1="1099.5" y1="168.4" x2="1092.5" y2="176.4" stroke="#007000" stroke-width="1.1" /><line x1="1104" y1="169.6" x2="1097" y2="177.6" stroke="#007000" stroke-width="1.1" /><polygon points="1059,192 1125,206 1119,220 1051,207" fill="#00FF00" /><line x1="1062" y1="194" x2="1052" y2="207" stroke="#007000" stroke-width="1.1" /><line x1="1066.4" y1="195" x2="1056.4" y2="208" stroke="#007000" stroke-width="1.1" /><line x1="1070.8" y1="196" x2="1060.8" y2="209" stroke="#007000" stroke-width="1.1" /><line x1="1075.2" y1="197" x2="1065.2" y2="210" stroke="#007000" stroke-width="1.1" /><line x1="1079.6" y1="198" x2="1069.6" y2="211" stroke="#007000" stroke-width="1.1" /><line x1="1084" y1="199" x2="1074" y2="212" stroke="#007000" stroke-width="1.1" /><line x1="1088.4" y1="200" x2="1078.4" y2="213" stroke="#007000" stroke-width="1.1" /><line x1="1092.8" y1="201" x2="1082.8" y2="214" stroke="#007000" stroke-width="1.1" /><line x1="1097.2" y1="202" x2="1087.2" y2="215" stroke="#007000" stroke-width="1.1" /><line x1="1101.6" y1="203" x2="1091.6" y2="216" stroke="#007000" stroke-width="1.1" /><line x1="1106" y1="204" x2="1096" y2="217" stroke="#007000" stroke-width="1.1" /><line x1="1110.4" y1="205" x2="1100.4" y2="218" stroke="#007000" stroke-width="1.1" /><line x1="1114.8" y1="206" x2="1104.8" y2="219" stroke="#007000" stroke-width="1.1" /><line x1="1119.2" y1="207" x2="1109.2" y2="220" stroke="#007000" stroke-width="1.1" /><line x1="1123.6" y1="208" x2="1113.6" y2="221" stroke="#007000" stroke-width="1.1" /><line x1="1051" y1="208" x2="1119" y2="220" stroke="#00FF00" stroke-width="3" /><polygon points="954,179 960,179 959,213 953,213" fill="#9000F0" /><polygon points="965,185 969,185 968,203 964,203" fill="#9000F0" /><polygon points="974,182 979,182 978,196 973,196" fill="#9000F0" /><polygon points="994,195 997,195 996,201 993,201" fill="#9000F0" /><polygon points="1007,196 1011,196 1010,226 1006,226" fill="#9000F0" /><polygon points="1015,201 1020,201 1019,218 1014,218" fill="#9000F0" /><polygon points="1046,207 1051,207 1050,237 1045,237" fill="#9000F0" /><polygon points="1052,184 1055,184 1054,195 1051,195" fill="#9000F0" /><polygon points="1057,185 1060,185 1059,195 1056,195" fill="#9000F0" /><polygon points="1057,167 1059,167 1058,173 1056,173" fill="#9000F0" /><polygon points="1066,170 1069,170 1068,175 1065,175" fill="#9000F0" /><polygon points="1058,212 1062,212 1061,227 1057,227" fill="#9000F0" /><polygon points="1097,218 1105,218 1104,251 1096,251" fill="#9000F0" /><polygon points="1097,178 1100,178 1099,196 1096,196" fill="#9000F0" /><polygon points="1106,170 1110,170 1109,195 1105,195" fill="#9000F0" /><polygon points="1114,204 1119,204 1118,243 1113,243" fill="#9000F0" /><polygon points="1078,218 1081,218 1080,224 1077,224" fill="#9000F0" /><polygon points="1120,203 1124,203 1123,237 1119,237" fill="#C8C8F8" /><circle cx="478" cy="650" r="9" fill="none" stroke="#00A000" stroke-width="0.8"/><circle cx="487.5" cy="641.5" r="9" fill="none" stroke="#00A000" stroke-width="0.8"/><circle cx="497" cy="633" r="9" fill="none" stroke="#00A000" stroke-width="0.8"/><circle cx="506.5" cy="624.5" r="9" fill="none" stroke="#00A000" stroke-width="0.8"/><circle cx="516" cy="616" r="9" fill="none" stroke="#00A000" stroke-width="0.8"/><circle cx="525.5" cy="607.5" r="9" fill="none" stroke="#00A000" stroke-width="0.8"/><circle cx="535" cy="599" r="9" fill="none" stroke="#00A000" stroke-width="0.8"/><circle cx="544.5" cy="590.5" r="9" fill="none" stroke="#00A000" stroke-width="0.8"/><circle cx="554" cy="582" r="9" fill="none" stroke="#00A000" stroke-width="0.8"/><circle cx="563.5" cy="573.5" r="9" fill="none" stroke="#00A000" stroke-width="0.8"/><circle cx="573" cy="565" r="9" fill="none" stroke="#00A000" stroke-width="0.8"/><circle cx="582.5" cy="556.5" r="9" fill="none" stroke="#00A000" stroke-width="0.8"/><circle cx="500" cy="660" r="9" fill="none" stroke="#00A000" stroke-width="0.8"/><circle cx="508.5" cy="650.5" r="9" fill="none" stroke="#00A000" stroke-width="0.8"/><circle cx="517" cy="641" r="9" fill="none" stroke="#00A000" stroke-width="0.8"/><circle cx="525.5" cy="631.5" r="9" fill="none" stroke="#00A000" stroke-width="0.8"/><circle cx="534" cy="622" r="9" fill="none" stroke="#00A000" stroke-width="0.8"/><circle cx="542.5" cy="612.5" r="9" fill="none" stroke="#00A000" stroke-width="0.8"/><circle cx="551" cy="603" r="9" fill="none" stroke="#00A000" stroke-width="0.8"/><circle cx="559.5" cy="593.5" r="9" fill="none" stroke="#00A000" stroke-width="0.8"/><circle cx="568" cy="584" r="9" fill="none" stroke="#00A000" stroke-width="0.8"/><circle cx="576.5" cy="574.5" r="9" fill="none" stroke="#00A000" stroke-width="0.8"/><circle cx="540" cy="590" r="9" fill="none" stroke="#00A000" stroke-width="0.8"/><circle cx="546" cy="584" r="9" fill="none" stroke="#00A000" stroke-width="0.8"/><circle cx="552" cy="578" r="9" fill="none" stroke="#00A000" stroke-width="0.8"/><circle cx="558" cy="572" r="9" fill="none" stroke="#00A000" stroke-width="0.8"/><circle cx="564" cy="566" r="9" fill="none" stroke="#00A000" stroke-width="0.8"/><circle cx="570" cy="560" r="9" fill="none" stroke="#00A000" stroke-width="0.8"/><circle cx="576" cy="554" r="9" fill="none" stroke="#00A000" stroke-width="0.8"/><circle cx="582" cy="548" r="9" fill="none" stroke="#00A000" stroke-width="0.8"/><text x="471" y="663" font-family="Liberation Sans" font-size="13" fill="#F0F0F0" textLength="9" lengthAdjust="spacingAndGlyphs">0</text><text x="473" y="647" font-family="Liberation Sans" font-size="13" fill="#F0F0F0" textLength="27" lengthAdjust="spacingAndGlyphs">2-0</text><text x="486" y="630" font-family="Liberation Sans" font-size="13" fill="#F0F0F0" textLength="27" lengthAdjust="spacingAndGlyphs">2-E</text><text x="502" y="617" font-family="Liberation Sans" font-size="13" fill="#F0F0F0" textLength="15" lengthAdjust="spacingAndGlyphs">29</text><text x="530" y="599" font-family="Liberation Sans" font-size="13" fill="#F0F0F0" textLength="15" lengthAdjust="spacingAndGlyphs">HG</text><text x="551" y="587" font-family="Liberation Sans" font-size="13" fill="#F0F0F0" textLength="9" lengthAdjust="spacingAndGlyphs">E</text><text x="564" y="577" font-family="Liberation Sans" font-size="13" fill="#F0F0F0" textLength="9" lengthAdjust="spacingAndGlyphs">D</text><text transform="translate(500 663) rotate(-78)" font-family="Liberation Sans" font-size="13" fill="#F0F0F0" font-size="12">900</text><text transform="translate(515 661) rotate(-78)" font-family="Liberation Sans" font-size="13" fill="#F0F0F0" font-size="12">3300</text><text transform="translate(535 644) rotate(-78)" font-family="Liberation Sans" font-size="13" fill="#F0F0F0" font-size="12">3600</text><text transform="translate(556 632) rotate(-78)" font-family="Liberation Sans" font-size="13" fill="#F0F0F0" font-size="12">3300</text><text transform="translate(566 610) rotate(-78)" font-family="Liberation Sans" font-size="13" fill="#F0F0F0" font-size="12">3300</text><line x1="525" y1="607" x2="490" y2="597" stroke="#FF0000" stroke-width="4" /><polygon points="480,595 493,591 491,603" fill="#FF0000"/><line x1="476" y1="598" x2="485" y2="606" stroke="#FF2020" stroke-width="1" /><line x1="485" y1="598" x2="476" y2="606" stroke="#FF2020" stroke-width="1" /><line x1="527" y1="606" x2="529.5" y2="575" stroke="#2080FF" stroke-width="4" /><polygon points="530,561 525,576 535,576" fill="#2080FF"/><path d="M535 559h8l-8 10h8" stroke="#3090FF" fill="none"/><line x1="526" y1="607" x2="508" y2="621" stroke="#00FF00" stroke-width="4" /><polygon points="504,624 508,614 514,621" fill="#00FF00"/><path d="M492 612l4 5l4-5M496 617v5" stroke="#00D000" fill="none"/><circle cx="916" cy="398.5" r="234.5" fill="none" stroke="#B0B0B0" stroke-width="1"/><circle cx="916" cy="164" r="14.75" fill="none" stroke="#B0B0B0" stroke-width="1"/><circle cx="681.5" cy="398.5" r="14.75" fill="none" stroke="#B0B0B0" stroke-width="1"/><circle cx="1150.5" cy="398.5" r="14.75" fill="none" stroke="#B0B0B0" stroke-width="1"/><circle cx="916" cy="633" r="14.75" fill="none" stroke="#B0B0B0" stroke-width="1"/></svg>
<div class="a" style="left:470px;top:663px;width:890px;height:26px;background:#ECE9D8"></div>
<div class="a" style="left:470px;top:663px;width:707px;height:25px;background:linear-gradient(#F6F5EF,#E8E5D5);border-bottom:1px solid #D6D2C0"></div>
<div class="a" style="left:470px;top:688px;width:890px;height:2px;background:#D6D2C2"></div>
<svg class="a" style="left:473px;top:667px;" width="3" height="18" viewBox="0 0 3 18"><rect x="0" y="0" width="2" height="2" fill="#A8A592"/><rect x="1" y="1" width="1" height="1" fill="#fff"/><rect x="0" y="4" width="2" height="2" fill="#A8A592"/><rect x="1" y="5" width="1" height="1" fill="#fff"/><rect x="0" y="8" width="2" height="2" fill="#A8A592"/><rect x="1" y="9" width="1" height="1" fill="#fff"/><rect x="0" y="12" width="2" height="2" fill="#A8A592"/><rect x="1" y="13" width="1" height="1" fill="#fff"/><rect x="0" y="16" width="2" height="2" fill="#A8A592"/><rect x="1" y="17" width="1" height="1" fill="#fff"/></svg>
<div class="a" style="left:480px;top:667px;width:56px;height:17px;background:#ECE9D8;border:1px solid #fff"></div>
<div class="t dis" style="left:483px;top:669px;color:#ACA899;">不偏移</div>
<div class="a" style="left:520px;top:669px;width:15px;height:13px;background:#E8E6DC;border:1px solid #E0DED2;border-radius:2px"></div>
<svg class="a" style="left:523px;top:672px;" width="9" height="6" viewBox="0 0 9 6"><path d="M1 1l3.5 3.5L8 1" stroke="#C8C6BA" stroke-width="2" fill="none"/></svg>
<div class="a" style="left:541px;top:666px;width:1px;height:18px;background:#C5C2B2"></div>
<div class="a" style="left:542px;top:666px;width:1px;height:18px;background:#fff"></div>
<div class="t dis" style="left:544px;top:669px;color:#ACA899;"><span class="asc">X=</span></div>
<div class="a" style="left:559px;top:667px;width:56px;height:17px;background:#ECE9D8;border:1px solid #fff"></div>
<div class="t dis" style="left:589px;top:669px;color:#ACA899;"><span class="asc">0</span></div>
<div class="a" style="left:601px;top:668px;width:13px;height:15px;background:#E6E4D8;border-radius:2px"></div>
<svg class="a" style="left:603px;top:669px;" width="9" height="13" viewBox="0 0 9 13"><path d="M1 5l3.5-3l3.5 3M1 8l3.5 3l3.5-3" stroke="#C0BEB2" stroke-width="1.5" fill="none"/></svg>
<div class="t dis" style="left:617px;top:670px;color:#ACA899;font-size:10px"><span class="asc">mm</span></div>
<div class="t dis" style="left:635px;top:669px;color:#ACA899;"><span class="asc">Y=</span></div>
<div class="a" style="left:651px;top:667px;width:56px;height:17px;background:#ECE9D8;border:1px solid #fff"></div>
<div class="t dis" style="left:681px;top:669px;color:#ACA899;"><span class="asc">0</span></div>
<div class="a" style="left:693px;top:668px;width:13px;height:15px;background:#E6E4D8;border-radius:2px"></div>
<svg class="a" style="left:695px;top:669px;" width="9" height="13" viewBox="0 0 9 13"><path d="M1 5l3.5-3l3.5 3M1 8l3.5 3l3.5-3" stroke="#C0BEB2" stroke-width="1.5" fill="none"/></svg>
<div class="t dis" style="left:709px;top:670px;color:#ACA899;font-size:10px"><span class="asc">mm</span></div>
<div class="a" style="left:724px;top:666px;width:1px;height:18px;background:#C5C2B2"></div>
<div class="a" style="left:725px;top:666px;width:1px;height:18px;background:#fff"></div>
<div class="a" style="left:728px;top:669px;width:13px;height:13px;background:#fff;border:1px solid #1C5180"></div>
<div class="t " style="left:749px;top:669px;color:#000;">旋转</div>
<div class="a" style="left:778px;top:667px;width:67px;height:17px;background:#ECE9D8;border:1px solid #fff"></div>
<div class="t dis" style="left:795px;top:669px;color:#ACA899;"><span class="asc">0.000</span></div>
<div class="a" style="left:831px;top:668px;width:13px;height:15px;background:#E6E4D8;border-radius:2px"></div>
<svg class="a" style="left:833px;top:669px;" width="9" height="13" viewBox="0 0 9 13"><path d="M1 5l3.5-3l3.5 3M1 8l3.5 3l3.5-3" stroke="#C0BEB2" stroke-width="1.5" fill="none"/></svg>
<div class="t dis" style="left:847px;top:665px;color:#ACA899;">°</div>
<svg class="a" style="left:866px;top:667px;" width="3" height="18" viewBox="0 0 3 18"><rect x="0" y="0" width="2" height="2" fill="#A8A592"/><rect x="1" y="1" width="1" height="1" fill="#fff"/><rect x="0" y="4" width="2" height="2" fill="#A8A592"/><rect x="1" y="5" width="1" height="1" fill="#fff"/><rect x="0" y="8" width="2" height="2" fill="#A8A592"/><rect x="1" y="9" width="1" height="1" fill="#fff"/><rect x="0" y="12" width="2" height="2" fill="#A8A592"/><rect x="1" y="13" width="1" height="1" fill="#fff"/><rect x="0" y="16" width="2" height="2" fill="#A8A592"/><rect x="1" y="17" width="1" height="1" fill="#fff"/></svg>
<svg class="a" style="left:873px;top:667px;" width="16" height="16" viewBox="0 0 16 16"><path d="M2 2h12M4 2v13M4 8l9 7" stroke="#BDBBAF" stroke-width="1.8" fill="none"/></svg>
<div class="t dis" style="left:892px;top:670px;color:#ACA899;">正交</div>
<svg class="a" style="left:924px;top:667px;" width="14" height="16" viewBox="0 0 14 16"><path fill="none" d="M1 1l12 14M13 1L1 15" stroke="#BDBBAF" stroke-width="1.5"/></svg>
<div class="t dis" style="left:942px;top:670px;color:#ACA899;">交点</div>
<svg class="a" style="left:974px;top:667px;" width="16" height="16" viewBox="0 0 16 16"><path fill="none" d="M1 14h14M11 2v12" stroke="#BDBBAF" stroke-width="1.5"/><circle cx="11" cy="14" r="1.5" fill="#BDBBAF"/></svg>
<div class="t dis" style="left:994px;top:670px;color:#ACA899;">垂点</div>
<svg class="a" style="left:1025px;top:667px;" width="16" height="16" viewBox="0 0 16 16"><path fill="none" d="M1 8h14" stroke="#BDBBAF" stroke-width="1.3"/><rect x="6" y="6" width="4" height="4" fill="#BDBBAF"/></svg>
<div class="t dis" style="left:1045px;top:670px;color:#ACA899;">中点</div>
<svg class="a" style="left:1076px;top:667px;" width="16" height="16" viewBox="0 0 16 16"><path d="M8 1l7 5l-3 8H4L1 6z" stroke="#BDBBAF" stroke-width="1.3" fill="none"/></svg>
<div class="t dis" style="left:1096px;top:670px;color:#ACA899;">顶点</div>
<svg class="a" style="left:1126px;top:666px;" width="18" height="18" viewBox="0 0 18 18"><path fill="none" d="M3 2v14h14" stroke="#BDBBAF" stroke-dasharray="2 1"/><path d="M4 15l5-6l4 2l3-8" stroke="#BDBBAF" fill="none"/><circle cx="4" cy="15" r="1.5" fill="#BDBBAF"/></svg>
<div class="t dis" style="left:1147px;top:670px;color:#ACA899;">坐标</div>
<div class="a" style="left:0px;top:690px;width:1360px;height:22px;background:#ECE9D8;border-top:1px solid #fff"></div>
<div class="a" style="left:146px;top:692px;width:1px;height:19px;background:#ACA899"></div>
<div class="a" style="left:147px;top:692px;width:1px;height:19px;background:#fff"></div>
<div class="a" style="left:224px;top:692px;width:1px;height:19px;background:#ACA899"></div>
<div class="a" style="left:225px;top:692px;width:1px;height:19px;background:#fff"></div>
<div class="a" style="left:348px;top:692px;width:1px;height:19px;background:#ACA899"></div>
<div class="a" style="left:349px;top:692px;width:1px;height:19px;background:#fff"></div>
<div class="a" style="left:402px;top:692px;width:1px;height:19px;background:#ACA899"></div>
<div class="a" style="left:403px;top:692px;width:1px;height:19px;background:#fff"></div>
<div class="a" style="left:655px;top:692px;width:1px;height:19px;background:#ACA899"></div>
<div class="a" style="left:656px;top:692px;width:1px;height:19px;background:#fff"></div>
<div class="a" style="left:1141px;top:692px;width:1px;height:19px;background:#ACA899"></div>
<div class="a" style="left:1142px;top:692px;width:1px;height:19px;background:#fff"></div>
<div class="a" style="left:1211px;top:692px;width:1px;height:19px;background:#ACA899"></div>
<div class="a" style="left:1212px;top:692px;width:1px;height:19px;background:#fff"></div>
<div class="t " style="left:0px;top:696px;color:#000;"><span class="asc">X=109422&nbsp;Y=-118332</span></div>
<div class="t " style="left:149px;top:696px;color:#000;">层高<span class="asc">:5.1m</span></div>
<div class="t " style="left:228px;top:696px;color:#000;">建筑底标高<span class="asc">:-0.05m</span></div>
<div class="t " style="left:358px;top:696px;color:#000;"><span class="asc">0</span></div>
<div class="t " style="left:407px;top:696px;color:#000;">当前楼层对应地库、商业首层</div>
<div class="t " style="left:1144px;top:696px;color:#000;"><span class="asc">14.2FPS</span></div>
</body></html>
